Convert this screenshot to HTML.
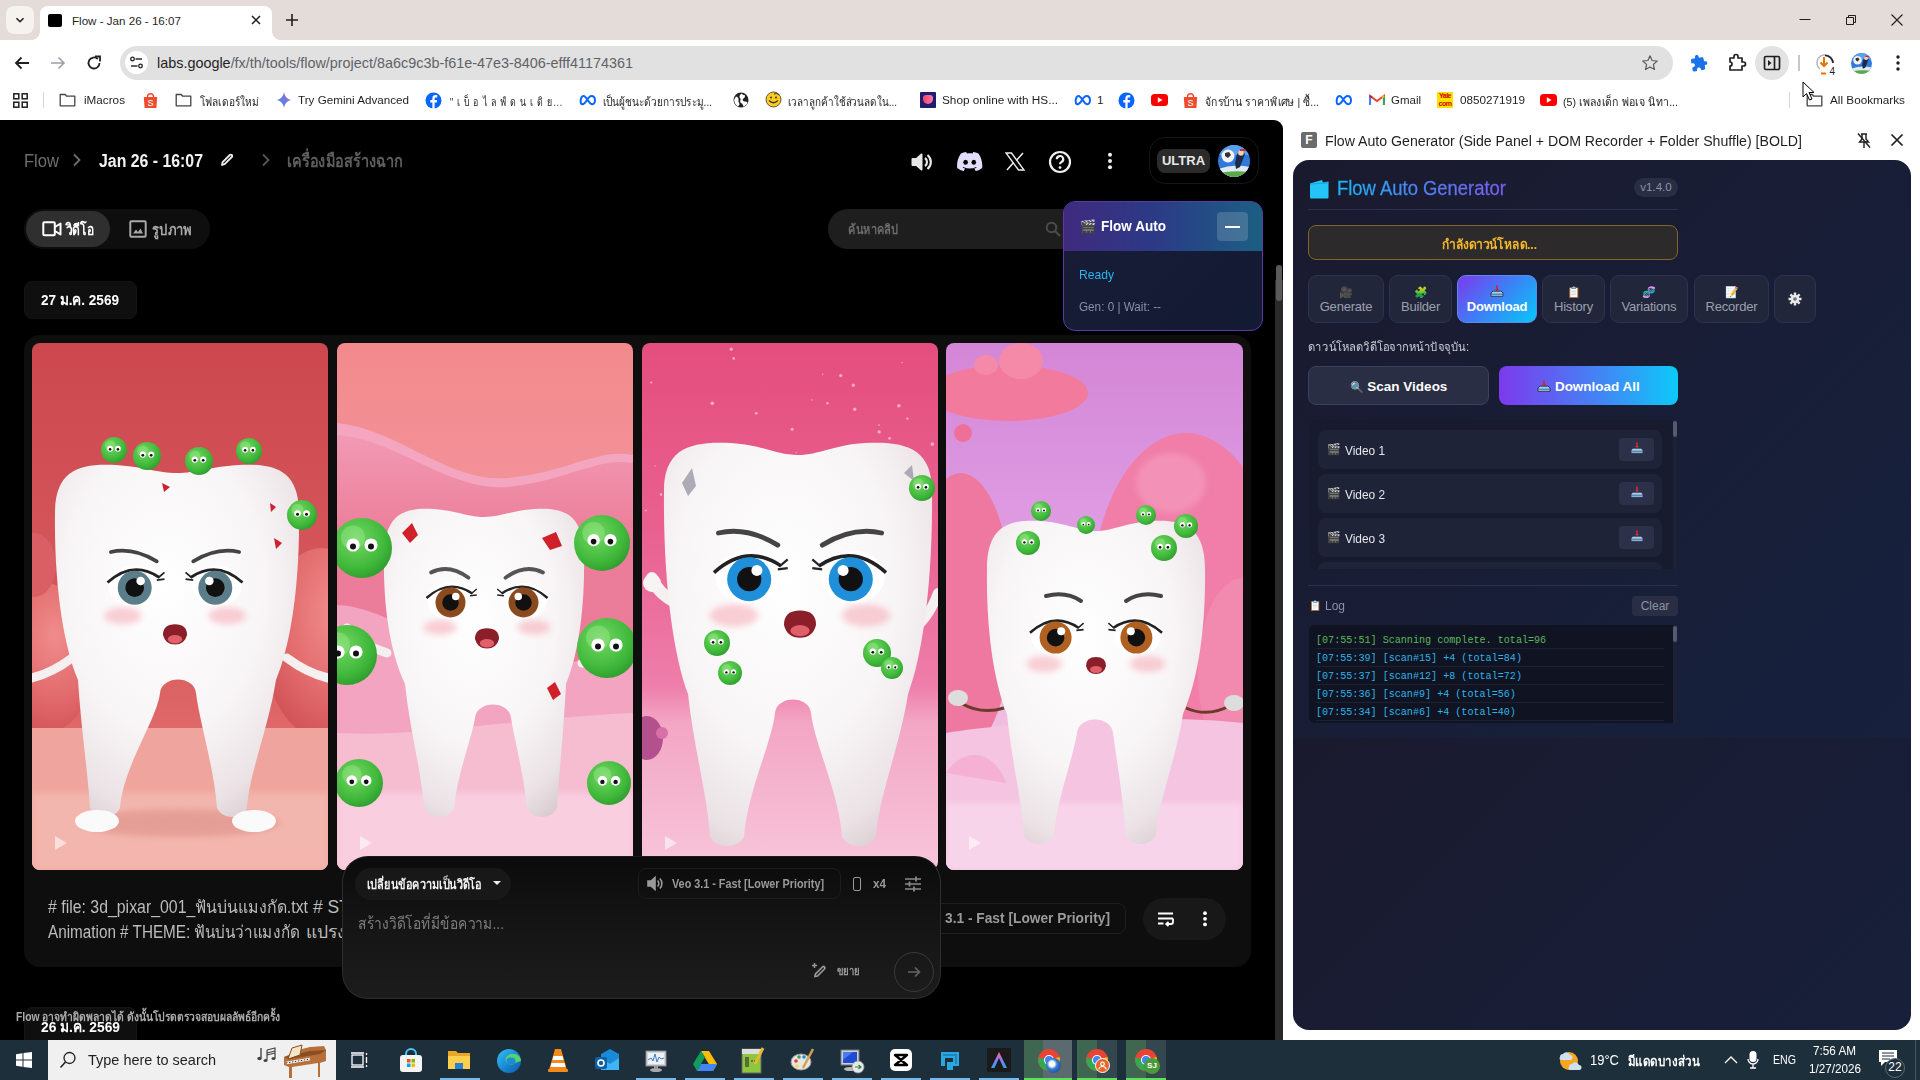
<!DOCTYPE html>
<html><head><meta charset="utf-8">
<style>
*{box-sizing:border-box;margin:0;padding:0}
html,body{width:1920px;height:1080px;overflow:hidden;background:#fff;font-family:"Liberation Sans",sans-serif}
.a{position:absolute}
#tabs{left:0;top:0;width:1920px;height:40px;background:#e4dcd8}
#toolbar{left:0;top:40px;width:1920px;height:40px;background:#fff}
#bm{left:0;top:80px;width:1920px;height:40px;background:#fff}
#page{left:0;top:120px;width:1283px;height:920px;background:#000;border-top-right-radius:9px;overflow:hidden}
#side{left:1283px;top:120px;width:637px;height:920px;background:#fff}
.t12{font-size:11.6px;white-space:nowrap}
.bmt{position:absolute;top:12.7px;font-size:11.7px;color:#1f1f1f;white-space:nowrap}
#taskbar{left:0;top:1040px;width:1920px;height:40px;background:#1e2f3c}
</style></head><body>
<div id="tabs" class="a">
  <div class="a" style="left:6px;top:6px;width:28px;height:28px;background:#f6f2f0;border-radius:8px"></div>
  <svg class="a" style="left:14px;top:14px" width="12" height="12" viewBox="0 0 12 12"><path d="M2.5 4.2 L6 7.7 L9.5 4.2" stroke="#202124" stroke-width="1.6" fill="none"/></svg>
  <div class="a" style="left:40px;top:6px;width:232px;height:34px;background:#fff;border-radius:8px 8px 0 0"></div>
  <div class="a" style="left:32px;top:32px;width:8px;height:8px;background:radial-gradient(circle at 0 0,#e4dcd8 7.5px,#fff 8px)"></div>
  <div class="a" style="left:272px;top:32px;width:8px;height:8px;background:radial-gradient(circle at 8px 0,#e4dcd8 7.5px,#fff 8px)"></div>
  <div class="a" style="left:48px;top:14px;width:14px;height:13px;background:#000;border-radius:2px;filter:blur(0.6px)"></div>
  <div class="a t12" style="left:72px;top:13.5px;color:#1f1f1f">Flow - Jan 26 - 16:07</div>
  <svg class="a" style="left:250px;top:14px" width="12" height="12" viewBox="0 0 12 12"><path d="M2 2L10 10M10 2L2 10" stroke="#1f1f1f" stroke-width="1.5"/></svg>
  <svg class="a" style="left:285px;top:13px" width="14" height="14" viewBox="0 0 14 14"><path d="M7 1V13M1 7H13" stroke="#1f1f1f" stroke-width="1.6"/></svg>
  <svg class="a" style="left:1799px;top:14px" width="12" height="12" viewBox="0 0 12 12"><path d="M0.5 5.5H11.5" stroke="#1f1f1f" stroke-width="1"/></svg>
  <svg class="a" style="left:1845px;top:14px" width="12" height="12" viewBox="0 0 12 12"><path d="M1.5 3.5H8.5V10.5H1.5Z M3.5 3.5V1.5H10.5V8.5H8.5" stroke="#1f1f1f" stroke-width="1" fill="none"/></svg>
  <svg class="a" style="left:1891px;top:14px" width="12" height="12" viewBox="0 0 12 12"><path d="M0.5 0.5L11.5 11.5M11.5 0.5L0.5 11.5" stroke="#1f1f1f" stroke-width="1.1"/></svg>
</div>
<div id="toolbar" class="a">
  <svg class="a" style="left:13px;top:14px" width="18" height="18" viewBox="0 0 18 18"><path d="M16 9H3M8.5 3.5L3 9L8.5 14.5" stroke="#1f1f1f" stroke-width="1.8" fill="none"/></svg>
  <svg class="a" style="left:49px;top:14px" width="18" height="18" viewBox="0 0 18 18"><path d="M2 9H15M9.5 3.5L15 9L9.5 14.5" stroke="#9aa0a6" stroke-width="1.6" fill="none"/></svg>
  <svg class="a" style="left:85px;top:14px" width="18" height="18" viewBox="0 0 18 18"><path d="M14.5 9A5.5 5.5 0 1 1 12.8 5" stroke="#1f1f1f" stroke-width="1.8" fill="none"/><path d="M10 2.5H15V7.5" stroke="#1f1f1f" stroke-width="1.8" fill="none"/></svg>
  <div class="a" style="left:120px;top:6px;width:1553px;height:34px;background:#e1e1e1;border-radius:17px"></div>
  <div class="a" style="left:125px;top:11px;width:23px;height:23px;background:#fff;border-radius:50%"></div>
  <svg class="a" style="left:129px;top:15px" width="15" height="15" viewBox="0 0 15 15"><circle cx="3.5" cy="4" r="1.8" stroke="#1f1f1f" stroke-width="1.3" fill="none"/><path d="M6.5 4H13" stroke="#1f1f1f" stroke-width="1.4"/><path d="M2 11H8.5" stroke="#1f1f1f" stroke-width="1.4"/><circle cx="11.5" cy="11" r="1.8" stroke="#1f1f1f" stroke-width="1.3" fill="none"/></svg>
  <div class="a" style="left:157px;top:15px;font-size:14.4px;color:#1f1f1f;white-space:nowrap">labs.google<span style="color:#5f6368">/fx/th/tools/flow/project/8a6c9c3b-f61e-47e3-8406-efff41174361</span></div>
  <svg class="a" style="left:1641px;top:14px" width="18" height="18" viewBox="0 0 18 18"><path d="M9 1.8L11.1 6.5L16.2 7L12.4 10.4L13.5 15.5L9 12.9L4.5 15.5L5.6 10.4L1.8 7L6.9 6.5Z" stroke="#5a5a5a" stroke-width="1.2" fill="none" stroke-linejoin="round"/></svg>
  <svg class="a" style="left:1690px;top:55px;transform:translateY(-41px) rotate(-10deg)" width="18" height="18" viewBox="0 0 24 24"><path d="M20.5 11H19V7c0-1.1-.9-2-2-2h-4V3.5C13 2.12 11.88 1 10.5 1S8 2.12 8 3.5V5H4c-1.1 0-1.99.9-1.99 2v3.8H3.5c1.49 0 2.7 1.21 2.7 2.7s-1.21 2.7-2.7 2.7H2V20c0 1.1.9 2 2 2h3.8v-1.5c0-1.490 1.21-2.7 2.7-2.7 1.49 0 2.7 1.21 2.7 2.7V22H17c1.1 0 2-.9 2-2v-4h1.5c1.38 0 2.5-1.12 2.5-2.5S21.88 11 20.5 11z" fill="#1a73e8"/></svg>
  <svg class="a" style="left:1727px;top:13px" width="20" height="20" viewBox="0 0 20 20"><path d="M3 5H7V3.5A2 2 0 0 1 11 3.5V5H15V9H16.5A2 2 0 0 1 16.5 13H15V17H3V13A2 2 0 0 0 3 9Z" stroke="#1f1f1f" stroke-width="1.7" fill="none" stroke-linejoin="round"/></svg>
  <div class="a" style="left:1755px;top:6px;width:34px;height:34px;background:#e3e3e3;border-radius:50%"></div>
  <svg class="a" style="left:1763px;top:14px" width="18" height="18" viewBox="0 0 18 18"><rect x="1.5" y="2.5" width="15" height="13" rx="1.5" stroke="#1f1f1f" stroke-width="1.7" fill="none"/><path d="M11.5 2.5V15.5" stroke="#1f1f1f" stroke-width="1.7"/><path d="M5 6L8.5 9L5 12Z" fill="#1f1f1f"/></svg>
  <div class="a" style="left:1798px;top:15px;width:1.5px;height:16px;background:#c7c7c7"></div>
  <svg class="a" style="left:1814px;top:11px" width="24" height="26" viewBox="0 0 24 26"><path d="M19 12A8 8 0 1 0 6 18" stroke="#bbb" stroke-width="1.6" fill="none"/><path d="M11 4.5A8 8 0 0 1 19 12" stroke="#1f1f1f" stroke-width="1.6" fill="none"/><path d="M10 6V15M6.5 11.5L10 15L13.5 11.5" stroke="#e37400" stroke-width="2" fill="none"/><path d="M7 22.5H12" stroke="#e37400" stroke-width="2"/><text x="15.5" y="24" font-size="10" font-family="Liberation Sans" fill="#1f1f1f">4</text></svg>
  <svg class="a" style="left:1851px;top:13px" width="21" height="21" viewBox="0 0 32 32"><defs><clipPath id="avc1851"><circle cx="16" cy="16" r="16"/></clipPath></defs><g clip-path="url(#avc1851)"><rect width="32" height="32" fill="#2f7ad8"/><rect y="0" width="32" height="10" fill="#5aa0ee"/><path d="M0 24Q16 18 32 22V32H0Z" fill="#dfeaf5"/><path d="M0 28Q16 25 32 27V32H0Z" fill="#5aa848"/><circle cx="10" cy="11" r="6.5" fill="#f2f2f2"/><path d="M7 8L11 7L13 10L10 13L7 11Z" fill="#333"/><path d="M19 9L24 6L27 9L25 14L22 22L18 24L17 18Z" fill="#1b2a4a"/><circle cx="23" cy="8" r="2.8" fill="#f4d0b0"/><path d="M22 4H28V6H22Z" fill="#d42a2a"/></g></svg>
  <svg class="a" style="left:1889px;top:14px" width="18" height="18" viewBox="0 0 18 18"><circle cx="9" cy="3" r="1.7" fill="#1f1f1f"/><circle cx="9" cy="9" r="1.7" fill="#1f1f1f"/><circle cx="9" cy="15" r="1.7" fill="#1f1f1f"/></svg>
</div>
<div id="bm" class="a">
  <svg class="a" style="left:13px;top:13px" width="15" height="15" viewBox="0 0 15 15"><rect x="0.8" y="0.8" width="5" height="5" stroke="#1f1f1f" stroke-width="1.5" fill="none"/><rect x="9.2" y="0.8" width="5" height="5" stroke="#1f1f1f" stroke-width="1.5" fill="none"/><rect x="0.8" y="9.2" width="5" height="5" stroke="#1f1f1f" stroke-width="1.5" fill="none"/><rect x="9.2" y="9.2" width="5" height="5" stroke="#1f1f1f" stroke-width="1.5" fill="none"/></svg>
  <div class="a" style="left:42.5px;top:12px;width:1px;height:16px;background:#d5d5d5"></div>
  <svg class="a" style="left:59px;top:12px" width="17" height="16" viewBox="0 0 17 16"><path d="M1.2 2.5H6.2L7.7 4.2H15.8V13.8H1.2Z" stroke="#444" stroke-width="1.3" fill="none" stroke-linejoin="round"/></svg><span class="bmt"  style="display:inline-block;transform-origin:0 50%;transform:scaleX(1.00191);left:84px">iMacros</span>
  <svg class="a" style="left:143px;top:12px" width="15" height="17" viewBox="0 0 15 17"><path d="M4.5 5A3 3.3 0 0 1 10.5 5" stroke="#ee4d2d" stroke-width="1.4" fill="none"/><path d="M0.8 5H14.2L13.4 16H1.6Z" fill="#ee4d2d"/><text x="7.5" y="14" font-size="9" text-anchor="middle" fill="#fff" font-family="Liberation Sans">S</text></svg>
  <svg class="a" style="left:175px;top:12px" width="17" height="16" viewBox="0 0 17 16"><path d="M1.2 2.5H6.2L7.7 4.2H15.8V13.8H1.2Z" stroke="#444" stroke-width="1.3" fill="none" stroke-linejoin="round"/></svg><span class="bmt"  style="display:inline-block;transform-origin:0 50%;transform:scaleX(0.867647);left:200px">โฟลเดอร์ใหม่</span>
  <svg class="a" style="left:276px;top:12px" width="16" height="16" viewBox="0 0 16 16"><defs><linearGradient id="gm" x1="0" y1="1" x2="1" y2="0"><stop offset="0" stop-color="#4285f4"/><stop offset="1" stop-color="#9b72cb"/></linearGradient></defs><path d="M8 0C8.6 4.5 11.5 7.4 16 8C11.5 8.6 8.6 11.5 8 16C7.4 11.5 4.5 8.6 0 8C4.5 7.4 7.4 4.5 8 0Z" fill="url(#gm)"/></svg>
  <span class="bmt"  style="display:inline-block;transform-origin:0 50%;transform:scaleX(0.997333);left:298px">Try Gemini Advanced</span>
  <svg class="a" style="left:425px;top:12px" width="17" height="17" viewBox="0 0 17 17"><circle cx="8.5" cy="8.5" r="8" fill="#0866ff"/><path d="M9.6 17V10.5H11.8L12.1 8H9.6V6.6C9.6 5.9 9.9 5.4 10.9 5.4H12.2V3.2C11.9 3.2 11.2 3.1 10.4 3.1C8.7 3.1 7.4 4.1 7.4 6.1V8H5.3V10.5H7.4V17Z" fill="#fff"/></svg><span class="bmt"  style="display:inline-block;transform-origin:0 50%;transform:scaleX(0.7553);left:450px;letter-spacing:1px">" เ บ็ อ ไ ล ฟ์ ด น เ ดิ ย...</span>
  <svg class="a" style="left:579px;top:13px" width="18" height="14" viewBox="0 0 18 14"><path d="M2 10.5C1 8 2 3 4.5 3C7 3 9.5 9 11.5 10.5C13.5 12 16 11 16 7.5C16 4 14 3 12.5 3C10.5 3 8.5 6 7 8.5C5.5 11 3 12 2 10.5Z" stroke="#0866ff" stroke-width="2" fill="none"/></svg><span class="bmt"  style="display:inline-block;transform-origin:0 50%;transform:scaleX(0.859961);left:603px">เป็นผู้ชนะด้วยการประมู...</span>
  <svg class="a" style="left:733px;top:12px" width="16" height="16" viewBox="0 0 16 16"><circle cx="8" cy="8" r="7.5" fill="#1f1f1f"/><path d="M3 4.5C5 5 6 6.5 5.5 8.5C5 10 6.5 10.5 6.5 12.5L5 14.5C2.5 13 1 10.5 1.2 7.5Z M9 1.5C9.5 3 11 3.5 12 3C12.5 5 11 6 10 7C9 8 10.5 9.5 12 9.5C13 9.5 14 10 14.5 10.5C14 12.5 12.5 14 10.5 14.8C10 13 9.5 11.5 8 11C7 10.5 7 9 7.5 8C8 7 7 6 6.5 5C6 4 7 2.5 9 1.5Z" fill="#fff"/></svg>
  <svg class="a" style="left:765px;top:11px" width="17" height="18" viewBox="0 0 17 18"><circle cx="8.5" cy="8.5" r="7.5" fill="#ffcc1d" stroke="#333" stroke-width="0.8"/><path d="M4 9.5Q8.5 14 13 9.5" stroke="#333" stroke-width="1.2" fill="none"/><circle cx="6" cy="6.5" r="1" fill="#333"/><circle cx="11" cy="6.5" r="1" fill="#333"/><path d="M9 3Q12 1.5 14 4" stroke="#333" stroke-width="1" fill="none"/></svg>
  <span class="bmt"  style="display:inline-block;transform-origin:0 50%;transform:scaleX(0.846602);left:788px">เวลาลูกค้าใช้ส่วนลดใน...</span>
  <div class="a" style="left:920px;top:12px;width:16px;height:16px;background:linear-gradient(135deg,#f5a 0%,#f36 50%,#10156f 51%);border-radius:2px"></div>
  <div class="a" style="left:920px;top:12px;width:16px;height:16px;background:#1a1f71;border-radius:1px"></div>
  <div class="a" style="left:923px;top:15px;width:10px;height:9px;background:linear-gradient(90deg,#f46,#f7a);border-radius:3px 3px 5px 5px"></div>
  <span class="bmt"  style="display:inline-block;transform-origin:0 50%;transform:scaleX(1.0087);left:942px">Shop online with HS...</span>
  <svg class="a" style="left:1074px;top:13px" width="18" height="14" viewBox="0 0 18 14"><path d="M2 10.5C1 8 2 3 4.5 3C7 3 9.5 9 11.5 10.5C13.5 12 16 11 16 7.5C16 4 14 3 12.5 3C10.5 3 8.5 6 7 8.5C5.5 11 3 12 2 10.5Z" stroke="#0866ff" stroke-width="2" fill="none"/></svg><span class="bmt" style="left:1097px">1</span>
  <svg class="a" style="left:1118px;top:12px" width="17" height="17" viewBox="0 0 17 17"><circle cx="8.5" cy="8.5" r="8" fill="#0866ff"/><path d="M9.6 17V10.5H11.8L12.1 8H9.6V6.6C9.6 5.9 9.9 5.4 10.9 5.4H12.2V3.2C11.9 3.2 11.2 3.1 10.4 3.1C8.7 3.1 7.4 4.1 7.4 6.1V8H5.3V10.5H7.4V17Z" fill="#fff"/></svg>
  <svg class="a" style="left:1151px;top:14px" width="17" height="12" viewBox="0 0 17 12"><rect x="0" y="0" width="17" height="12" rx="3.5" fill="#ff0000"/><path d="M6.8 3.2L11.5 6L6.8 8.8Z" fill="#fff"/></svg>
  <svg class="a" style="left:1183px;top:12px" width="15" height="17" viewBox="0 0 15 17"><path d="M4.5 5A3 3.3 0 0 1 10.5 5" stroke="#ee4d2d" stroke-width="1.4" fill="none"/><path d="M0.8 5H14.2L13.4 16H1.6Z" fill="#ee4d2d"/><text x="7.5" y="14" font-size="9" text-anchor="middle" fill="#fff" font-family="Liberation Sans">S</text></svg><span class="bmt"  style="display:inline-block;transform-origin:0 50%;transform:scaleX(0.893899);left:1205px">จักรบ้าน ราคาพิเศษ | ซื้...</span>
  <svg class="a" style="left:1335px;top:13px" width="18" height="14" viewBox="0 0 18 14"><path d="M2 10.5C1 8 2 3 4.5 3C7 3 9.5 9 11.5 10.5C13.5 12 16 11 16 7.5C16 4 14 3 12.5 3C10.5 3 8.5 6 7 8.5C5.5 11 3 12 2 10.5Z" stroke="#0866ff" stroke-width="2" fill="none"/></svg>
  <svg class="a" style="left:1369px;top:14px" width="16" height="12" viewBox="0 0 16 12"><path d="M1 11V2L8 7L15 2V11" stroke="#ea4335" stroke-width="2" fill="none"/><path d="M1 11V2" stroke="#4285f4" stroke-width="2.2"/><path d="M15 11V2" stroke="#34a853" stroke-width="2.2"/><path d="M1 2L3 3.5" stroke="#c5221f" stroke-width="2"/><path d="M15 2L13 3.5" stroke="#fbbc04" stroke-width="2"/></svg>
  <span class="bmt"  style="display:inline-block;transform-origin:0 50%;transform:scaleX(0.9826);left:1391px">Gmail</span>
  <div class="a" style="left:1437px;top:12px;width:16px;height:16px;background:#ffe100"></div>
  <div class="a" style="left:1437px;top:12px;width:16px;font:bold 7px/8px 'Liberation Sans';color:#c00;text-align:center;letter-spacing:-0.5px">Yale<br>com</div>
  <span class="bmt"  style="display:inline-block;transform-origin:0 50%;transform:scaleX(0.99976);left:1460px">0850271919</span>
  <svg class="a" style="left:1540px;top:14px" width="17" height="12" viewBox="0 0 17 12"><rect x="0" y="0" width="17" height="12" rx="3.5" fill="#ff0000"/><path d="M6.8 3.2L11.5 6L6.8 8.8Z" fill="#fff"/></svg><span class="bmt"  style="display:inline-block;transform-origin:0 50%;transform:scaleX(0.907074);left:1563px">(5) เพลงเด็ก พ่อเจ นิทา...</span>
  <div class="a" style="left:1788.5px;top:12px;width:1px;height:16px;background:#d5d5d5"></div>
  <svg class="a" style="left:1806px;top:12px" width="17" height="16" viewBox="0 0 17 16"><path d="M1.2 2.5H6.2L7.7 4.2H15.8V13.8H1.2Z" stroke="#444" stroke-width="1.3" fill="none" stroke-linejoin="round"/></svg><span class="bmt"  style="display:inline-block;transform-origin:0 50%;transform:scaleX(1.00397);left:1830px">All Bookmarks</span>
  <svg class="a" style="left:1802px;top:1px" width="14" height="20" viewBox="0 0 14 20"><path d="M1 1V16L4.5 12.5L7.5 19L10 18L7 11.5H12Z" fill="#fff" stroke="#000" stroke-width="1"/></svg>
</div>
<div id="page" class="a">
  <!-- header -->
  <div class="a"  style="display:inline-block;transform-origin:0 50%;transform:scaleX(0.920674);left:24px;top:31px;font-size:18px;color:#6e6e6e;white-space:nowrap">Flow</div>
  <svg class="a" style="left:70px;top:32px" width="14" height="16" viewBox="0 0 14 16"><path d="M4 2.5L9.5 8L4 13.5" stroke="#6e6e6e" stroke-width="1.8" fill="none"/></svg>
  <div class="a"  style="display:inline-block;transform-origin:0 50%;transform:scaleX(0.880773);left:99px;top:31px;font-size:18px;color:#f2f2f2;font-weight:bold;white-space:nowrap">Jan 26 - 16:07</div>
  <svg class="a" style="left:219px;top:32px" width="16" height="16" viewBox="0 0 16 16"><path d="M3 13L3.6 10.2L10.8 3A1.4 1.4 0 0 1 12.8 5L5.6 12.2Z" stroke="#eee" stroke-width="1.8" fill="none" stroke-linejoin="round"/></svg>
  <svg class="a" style="left:259px;top:32px" width="14" height="16" viewBox="0 0 14 16"><path d="M4 2.5L9.5 8L4 13.5" stroke="#555" stroke-width="1.8" fill="none"/></svg>
  <div class="a"  style="display:inline-block;transform-origin:0 50%;transform:scaleX(0.805556);left:287px;top:25.5px;font-size:18px;color:#5e5e5e;font-weight:bold;white-space:nowrap">เครื่องมือสร้างฉาก</div>
  <svg class="a" style="left:911px;top:32px" width="22" height="20" viewBox="0 0 22 20"><path d="M1.5 7H5.5L10.5 2.5V17.5L5.5 13H1.5Z" stroke="#e6e6e6" stroke-width="2" fill="#e6e6e6" stroke-linejoin="round"/><path d="M14 6A5 5 0 0 1 14 14" stroke="#e6e6e6" stroke-width="2.2" fill="none"/><path d="M16.5 3A9 9 0 0 1 16.5 17" stroke="#e6e6e6" stroke-width="2.2" fill="none"/></svg>
  <svg class="a" style="left:957px;top:31px" width="26" height="20" viewBox="0 0 26 20"><path d="M21.5 2.5C19.8 1.7 18 1.2 16.2 0.9L15.5 2.4C13.6 2.1 11.8 2.1 9.9 2.4L9.2 0.9C7.4 1.2 5.6 1.7 3.9 2.5C0.6 7.4 -0.3 12.2 0.2 16.9C2.4 18.5 4.5 19.5 6.6 20.1L8.2 17.6C7.3 17.3 6.5 16.9 5.7 16.4L6.3 15.9C10.5 17.9 15 17.9 19.1 15.9L19.7 16.4C18.9 16.9 18.1 17.3 17.2 17.6L18.8 20.1C20.9 19.5 23 18.5 25.2 16.9C25.7 11.4 24.3 6.7 21.5 2.5Z" fill="#e0defa"/><ellipse cx="8.6" cy="11.3" rx="2.3" ry="2.5" fill="#000"/><ellipse cx="16.8" cy="11.3" rx="2.3" ry="2.5" fill="#000"/></svg>
  <svg class="a" style="left:1005px;top:32px" width="20" height="19" viewBox="0 0 20 19"><path d="M1 1H6.5L19 18H13.5Z" stroke="#eee" stroke-width="1.4" fill="none"/><path d="M18 1L11.3 8.5M2 18L8.6 10.6" stroke="#eee" stroke-width="1.5"/></svg>
  <svg class="a" style="left:1048px;top:30px" width="24" height="24" viewBox="0 0 24 24"><circle cx="12" cy="12" r="10" stroke="#f0f0f0" stroke-width="2.2" fill="none"/><path d="M8.8 9.2A3.2 3.2 0 1 1 13.4 12.1C12.5 12.6 12 13.2 12 14.3" stroke="#f0f0f0" stroke-width="2.2" fill="none"/><circle cx="12" cy="17.6" r="1.4" fill="#f0f0f0"/></svg>
  <svg class="a" style="left:1104px;top:32px" width="12" height="18" viewBox="0 0 12 18"><circle cx="6" cy="2.8" r="2" fill="#eee"/><circle cx="6" cy="9" r="2" fill="#eee"/><circle cx="6" cy="15.2" r="2" fill="#eee"/></svg>
  <div class="a" style="left:1149px;top:17px;width:110px;height:47px;border-radius:16px;border:1px solid #161616"></div>
  <div class="a" style="left:1157px;top:29px;width:53px;height:24px;border-radius:8px;background:#2b2b2b;color:#e8e8e8;font-weight:bold;font-size:13px;line-height:24px;text-align:center">ULTRA</div>
  <svg class="a" style="left:1218px;top:25px" width="32" height="32" viewBox="0 0 32 32"><defs><clipPath id="avc1218"><circle cx="16" cy="16" r="16"/></clipPath></defs><g clip-path="url(#avc1218)"><rect width="32" height="32" fill="#2f7ad8"/><rect y="0" width="32" height="10" fill="#5aa0ee"/><path d="M0 24Q16 18 32 22V32H0Z" fill="#dfeaf5"/><path d="M0 28Q16 25 32 27V32H0Z" fill="#5aa848"/><circle cx="10" cy="11" r="6.5" fill="#f2f2f2"/><path d="M7 8L11 7L13 10L10 13L7 11Z" fill="#333"/><path d="M19 9L24 6L27 9L25 14L22 22L18 24L17 18Z" fill="#1b2a4a"/><circle cx="23" cy="8" r="2.8" fill="#f4d0b0"/><path d="M22 4H28V6H22Z" fill="#d42a2a"/></g></svg>
  <!-- tabs -->
  <div class="a" style="left:24px;top:89px;width:186px;height:40px;border-radius:20px;background:#0e0e0e"></div>
  <div class="a" style="left:26px;top:91px;width:84px;height:36px;border-radius:18px;background:#2f2f2f"></div>
  <svg class="a" style="left:42px;top:100px" width="20" height="18" viewBox="0 0 20 18"><rect x="1.3" y="2.3" width="11.5" height="13" rx="1" stroke="#fff" stroke-width="2" fill="none"/><path d="M13 7L18.5 3.5V14.5L13 11" stroke="#fff" stroke-width="2" fill="none" stroke-linejoin="round"/></svg>
  <div class="a"  style="display:inline-block;transform-origin:0 50%;transform:scaleX(0.8);left:66px;top:98px;font-size:15px;color:#fff;font-weight:bold;white-space:nowrap">วิดีโอ</div>
  <svg class="a" style="left:129px;top:100px" width="18" height="18" viewBox="0 0 18 18"><rect x="1.3" y="1.3" width="15.4" height="15.4" rx="1" stroke="#a8a8a8" stroke-width="2" fill="none"/><path d="M4 13.5L7 9.5L9 12L11.5 8.5L14 13.5Z" fill="#a8a8a8"/></svg>
  <div class="a"  style="display:inline-block;transform-origin:0 50%;transform:scaleX(0.869565);left:152px;top:98px;font-size:15px;color:#a8a8a8;font-weight:bold;white-space:nowrap">รูปภาพ</div>
  <!-- search -->
  <div class="a" style="left:828px;top:89px;width:260px;height:40px;border-radius:20px;background:#1e1e1e"></div>
  <div class="a"  style="display:inline-block;transform-origin:0 50%;transform:scaleX(0.847458);left:848px;top:98.5px;font-size:13px;color:#6b6b6b;font-weight:bold;white-space:nowrap">ค้นหาคลิป</div>
  <svg class="a" style="left:1045px;top:101px" width="16" height="16" viewBox="0 0 16 16"><circle cx="6.5" cy="6.5" r="4.8" stroke="#4a4a4a" stroke-width="2" fill="none"/><path d="M10 10L15 15" stroke="#4a4a4a" stroke-width="2.2"/></svg>
  <!-- date chip -->
  <div class="a" style="left:24px;top:161px;width:113px;height:38px;border-radius:8px;background:#0f0f0f;border:1px solid #141414"></div>
  <div class="a"  style="display:inline-block;transform-origin:0 50%;transform:scaleX(0.876866);left:41px;top:166.8px;font-size:15.5px;color:#fff;font-weight:bold;white-space:nowrap">27 ม.ค. 2569</div>
  <!-- card -->
  <div class="a" style="left:24px;top:215px;width:1227px;height:632px;border-radius:16px;background:#0e0e0e"></div>
  <div id="imgs"><div class="a" style="left:32px;top:223px;width:296px;height:527px;border-radius:8px;overflow:hidden"><svg width="296" height="527" viewBox="0 0 296 527"><defs><radialGradient id="gg" cx="0.4" cy="0.35" r="0.7"><stop offset="0" stop-color="#74d864"/><stop offset="0.7" stop-color="#3fb83a"/><stop offset="1" stop-color="#2e9a2e"/></radialGradient><filter id="bl3" x="-20%" y="-20%" width="140%" height="140%"><feGaussianBlur stdDeviation="0.7"/></filter><filter id="bl" x="-50%" y="-50%" width="200%" height="200%"><feGaussianBlur stdDeviation="3"/></filter><filter id="bl2" x="-50%" y="-50%" width="200%" height="200%"><feGaussianBlur stdDeviation="1.2"/></filter></defs><defs><linearGradient id="b1" x1="0" y1="0" x2="0" y2="1"><stop offset="0" stop-color="#cc484e"/><stop offset="0.5" stop-color="#d6585c"/><stop offset="0.73" stop-color="#df6868"/><stop offset="0.74" stop-color="#eb9890"/><stop offset="1" stop-color="#f4bdb5"/></linearGradient></defs><rect width="296" height="527" fill="url(#b1)"/><defs><radialGradient id="bu1" cx="0.6" cy="0.35" r="0.7"><stop offset="0" stop-color="#f08c8c"/><stop offset="0.6" stop-color="#e26a6c"/><stop offset="1" stop-color="#cf5256"/></radialGradient></defs><ellipse cx="12" cy="315" rx="52" ry="75" fill="url(#bu1)"/><ellipse cx="2" cy="222" rx="22" ry="32" fill="#d95f64"/><ellipse cx="290" cy="300" rx="58" ry="95" fill="url(#bu1)"/><rect x="0" y="385" width="296" height="142" fill="#efa59d"/><rect x="0" y="450" width="296" height="77" fill="#f3b6ae" filter="url(#bl)"/><ellipse cx="148" cy="480" rx="100" ry="14" fill="#d88880" opacity="0.5" filter="url(#bl)"/><path d="M40,315 Q20,330 0,335" stroke="#f5f0f0" stroke-width="9" fill="none" stroke-linecap="round"/><path d="M255,315 Q275,330 296,335" stroke="#f5f0f0" stroke-width="9" fill="none" stroke-linecap="round"/><defs><radialGradient id="tg1" cx="0.45" cy="0.35" r="0.75"><stop offset="0" stop-color="#ffffff"/><stop offset="0.55" stop-color="#f8f5f6"/><stop offset="0.85" stop-color="#ebe2e5"/><stop offset="1" stop-color="#d8cbcf"/></radialGradient></defs>
<path d="M23,170 C23,127 47.400000000000006,120 84.0,122 C113.28,124 125.48,130 145.0,130 C164.52,130 176.72,124 206.0,122 C242.6,120 267,127 267,170 C268,245.15 257.8,304.75 244,337 C236.75,383.9 217,430.8 215,465 C209.0,477 191.0,477 185,465 C182,423.75 167,376.5 164,350 C162,332 130,332 128,350 C125,376.5 91,423.75 88,465 C82.0,477 64.0,477 58,465 C56,430.8 49.0,383.9 46,337 C32.2,304.75 22,245.15 23,170 Z" fill="url(#tg1)"/><ellipse cx="65" cy="478" rx="22" ry="11" fill="#fafafa"/><ellipse cx="222" cy="478" rx="22" ry="11" fill="#fafafa"/><g transform="translate(101,243) scale(1,1)">
<ellipse cx="0" cy="0" rx="24.65" ry="20.4" fill="#fff"/>
<path d="M-25.5,-3.4000000000000004 Q0,-26.35 26.35,-8.5" stroke="#222" stroke-width="2.72" fill="none"/>
<path d="M25.5,-8.5 l5.949999999999999,-5.1 M23.799999999999997,-5.949999999999999 l7.65,-0.8500000000000001" stroke="#222" stroke-width="1.7000000000000002"/>
<circle cx="1.7000000000000002" cy="1.7000000000000002" r="17" fill="#5b7d8a"/>
<circle cx="1.7000000000000002" cy="1.7000000000000002" r="9.350000000000001" fill="#111"/>
<circle cx="7.65" cy="-5.1" r="4.25" fill="#fff"/>
</g><g transform="translate(185,243) scale(-1,1)">
<ellipse cx="0" cy="0" rx="24.65" ry="20.4" fill="#fff"/>
<path d="M-25.5,-3.4000000000000004 Q0,-26.35 26.35,-8.5" stroke="#222" stroke-width="2.72" fill="none"/>
<path d="M25.5,-8.5 l5.949999999999999,-5.1 M23.799999999999997,-5.949999999999999 l7.65,-0.8500000000000001" stroke="#222" stroke-width="1.7000000000000002"/>
<circle cx="1.7000000000000002" cy="1.7000000000000002" r="17" fill="#5b7d8a"/>
<circle cx="1.7000000000000002" cy="1.7000000000000002" r="9.350000000000001" fill="#111"/>
<circle cx="7.65" cy="-5.1" r="4.25" fill="#fff"/>
</g><path d="M78.9,209.0 Q101,203.9 124.8,218.35" stroke="#444" stroke-width="3.74" fill="none" stroke-linecap="round"/><path d="M207.1,209.0 Q185,203.9 161.2,218.35" stroke="#444" stroke-width="3.74" fill="none" stroke-linecap="round"/><ellipse cx="90.8" cy="272.75" rx="18.700000000000003" ry="8.5" fill="#f6a9b5" opacity="0.55" filter="url(#bl)"/><ellipse cx="195.2" cy="272.75" rx="18.700000000000003" ry="8.5" fill="#f6a9b5" opacity="0.55" filter="url(#bl)"/><path d="M131,292 Q131,281.2 143,281.2 Q155,281.2 155,292 Q152.6,301.6 143,301.6 Q133.4,301.6 131,292 Z" fill="#8a1f2a"/><ellipse cx="143" cy="296.2" rx="7.199999999999999" ry="4.199999999999999" fill="#e0606a"/><g transform="translate(82,107)"><circle r="13" fill="url(#gg)" filter="url(#bl3)"/><circle cx="-3.9" cy="-4.55" r="5.2" fill="#9be88a" opacity="0.45" filter="url(#bl3)"/><circle cx="-3.9" cy="-1.3" r="2.86" fill="#fff"/><circle cx="3.9" cy="-1.3" r="2.86" fill="#fff"/><circle cx="-3.9" cy="-0.65" r="1.3" fill="#111"/><circle cx="3.9" cy="-0.65" r="1.3" fill="#111"/></g><g transform="translate(115,113)"><circle r="14" fill="url(#gg)" filter="url(#bl3)"/><circle cx="-4.2" cy="-4.8999999999999995" r="5.6000000000000005" fill="#9be88a" opacity="0.45" filter="url(#bl3)"/><circle cx="-4.2" cy="-1.4000000000000001" r="3.08" fill="#fff"/><circle cx="4.2" cy="-1.4000000000000001" r="3.08" fill="#fff"/><circle cx="-4.2" cy="-0.7000000000000001" r="1.4000000000000001" fill="#111"/><circle cx="4.2" cy="-0.7000000000000001" r="1.4000000000000001" fill="#111"/></g><g transform="translate(167,118)"><circle r="14" fill="url(#gg)" filter="url(#bl3)"/><circle cx="-4.2" cy="-4.8999999999999995" r="5.6000000000000005" fill="#9be88a" opacity="0.45" filter="url(#bl3)"/><circle cx="-4.2" cy="-1.4000000000000001" r="3.08" fill="#fff"/><circle cx="4.2" cy="-1.4000000000000001" r="3.08" fill="#fff"/><circle cx="-4.2" cy="-0.7000000000000001" r="1.4000000000000001" fill="#111"/><circle cx="4.2" cy="-0.7000000000000001" r="1.4000000000000001" fill="#111"/></g><g transform="translate(217,108)"><circle r="13" fill="url(#gg)" filter="url(#bl3)"/><circle cx="-3.9" cy="-4.55" r="5.2" fill="#9be88a" opacity="0.45" filter="url(#bl3)"/><circle cx="-3.9" cy="-1.3" r="2.86" fill="#fff"/><circle cx="3.9" cy="-1.3" r="2.86" fill="#fff"/><circle cx="-3.9" cy="-0.65" r="1.3" fill="#111"/><circle cx="3.9" cy="-0.65" r="1.3" fill="#111"/></g><g transform="translate(270,172)"><circle r="15" fill="url(#gg)" filter="url(#bl3)"/><circle cx="-4.5" cy="-5.25" r="6.0" fill="#9be88a" opacity="0.45" filter="url(#bl3)"/><circle cx="-4.5" cy="-1.5" r="3.3" fill="#fff"/><circle cx="4.5" cy="-1.5" r="3.3" fill="#fff"/><circle cx="-4.5" cy="-0.75" r="1.5" fill="#111"/><circle cx="4.5" cy="-0.75" r="1.5" fill="#111"/></g><path d="M130,140 l8,4 -6,5z M238,160 l6,4 -5,5z M242,195 l8,5 -6,6z" fill="#d02030"/><path d="M23,493 L35,500 L23,507 Z" fill="#fff" opacity="0.55"/></svg></div>
<div class="a" style="left:337px;top:223px;width:296px;height:527px;border-radius:8px;overflow:hidden"><svg width="296" height="527" viewBox="0 0 296 527"><defs><radialGradient id="gg" cx="0.4" cy="0.35" r="0.7"><stop offset="0" stop-color="#74d864"/><stop offset="0.7" stop-color="#3fb83a"/><stop offset="1" stop-color="#2e9a2e"/></radialGradient><filter id="bl3" x="-20%" y="-20%" width="140%" height="140%"><feGaussianBlur stdDeviation="0.7"/></filter><filter id="bl" x="-50%" y="-50%" width="200%" height="200%"><feGaussianBlur stdDeviation="3"/></filter><filter id="bl2" x="-50%" y="-50%" width="200%" height="200%"><feGaussianBlur stdDeviation="1.2"/></filter></defs><defs><linearGradient id="b2" x1="0" y1="0" x2="0" y2="1"><stop offset="0" stop-color="#f28a8c"/><stop offset="0.25" stop-color="#f39198"/><stop offset="1" stop-color="#f0a0b4"/></linearGradient></defs><rect width="296" height="527" fill="url(#b2)"/><path d="M0,80 C60,85 110,140 170,135 C230,130 260,105 296,112 V420 H0Z" fill="#f4a6c0"/><defs><linearGradient id="w2" x1="0" y1="0" x2="0" y2="1"><stop offset="0" stop-color="#f29ab4"/><stop offset="0.3" stop-color="#ec7e9a"/><stop offset="1" stop-color="#ea7896"/></linearGradient></defs><path d="M0,92 C60,96 110,148 170,144 C230,138 260,114 296,120 V420 H0Z" fill="url(#w2)"/><path d="M0,262 C40,262 90,300 150,318 C200,330 250,320 296,300 V420 H0Z" fill="#f2a4c0"/><path d="M0,390 C80,395 180,375 296,370 V527 H0Z" fill="#f6bcd0"/><rect x="0" y="450" width="296" height="77" fill="#f9cfe0" filter="url(#bl)"/><path d="M50,310 Q20,300 10,285" stroke="#f5f0f0" stroke-width="9" fill="none" stroke-linecap="round"/><path d="M245,320 Q270,310 285,290" stroke="#f5f0f0" stroke-width="9" fill="none" stroke-linecap="round"/><defs><radialGradient id="tg2" cx="0.45" cy="0.35" r="0.75"><stop offset="0" stop-color="#ffffff"/><stop offset="0.55" stop-color="#f8f5f6"/><stop offset="0.85" stop-color="#ebe2e5"/><stop offset="1" stop-color="#d8cbcf"/></radialGradient></defs>
<path d="M47,214 C47,171 67.0,164 97.0,166 C121.0,168 131.0,174 147.0,174 C163.0,174 173.0,168 197.0,166 C227.0,164 247,171 247,214 C248,271.15 239.8,314.75 229,341 C226.75,386.5 222,432.0 220,465 C214.0,477 196.0,477 190,465 C187,432.5 177,394.0 174,375 C172,357 140,357 138,375 C135,394.0 120,432.5 117,465 C111.0,477 93.0,477 87,465 C85,432.0 72.75,386.5 68,341 C55.4,314.75 46,271.15 47,214 Z" fill="url(#tg2)"/><g transform="translate(112,258) scale(1,1)">
<ellipse cx="0" cy="0" rx="21.75" ry="18.0" fill="#fff"/>
<path d="M-22.5,-3.0 Q0,-23.25 23.25,-7.5" stroke="#222" stroke-width="2.4" fill="none"/>
<path d="M22.5,-7.5 l5.25,-4.5 M21.0,-5.25 l6.75,-0.75" stroke="#222" stroke-width="1.5"/>
<circle cx="1.5" cy="1.5" r="15" fill="#8a4a1e"/>
<circle cx="1.5" cy="1.5" r="8.25" fill="#111"/>
<circle cx="6.75" cy="-4.5" r="3.75" fill="#fff"/>
</g><g transform="translate(188,258) scale(-1,1)">
<ellipse cx="0" cy="0" rx="21.75" ry="18.0" fill="#fff"/>
<path d="M-22.5,-3.0 Q0,-23.25 23.25,-7.5" stroke="#222" stroke-width="2.4" fill="none"/>
<path d="M22.5,-7.5 l5.25,-4.5 M21.0,-5.25 l6.75,-0.75" stroke="#222" stroke-width="1.5"/>
<circle cx="1.5" cy="1.5" r="15" fill="#8a4a1e"/>
<circle cx="1.5" cy="1.5" r="8.25" fill="#111"/>
<circle cx="6.75" cy="-4.5" r="3.75" fill="#fff"/>
</g><path d="M94.0,229.5 Q112,220.5 131.5,234.75" stroke="#555" stroke-width="3.75" fill="none" stroke-linecap="round"/><path d="M206.0,229.5 Q188,220.5 168.5,234.75" stroke="#555" stroke-width="3.75" fill="none" stroke-linecap="round"/><ellipse cx="103.0" cy="284.25" rx="16.5" ry="7.5" fill="#f6a9b5" opacity="0.55" filter="url(#bl)"/><ellipse cx="197.0" cy="284.25" rx="16.5" ry="7.5" fill="#f6a9b5" opacity="0.55" filter="url(#bl)"/><path d="M138,296 Q138,285.2 150,285.2 Q162,285.2 162,296 Q159.6,305.6 150,305.6 Q140.4,305.6 138,296 Z" fill="#8a1f2a"/><ellipse cx="150" cy="300.2" rx="7.199999999999999" ry="4.199999999999999" fill="#e0606a"/><g transform="translate(25,205)"><circle r="30" fill="url(#gg)" filter="url(#bl3)"/><circle cx="-9.0" cy="-10.5" r="12.0" fill="#9be88a" opacity="0.45" filter="url(#bl3)"/><circle cx="-9.0" cy="-3.0" r="6.6" fill="#fff"/><circle cx="9.0" cy="-3.0" r="6.6" fill="#fff"/><circle cx="-9.0" cy="-1.5" r="3.0" fill="#111"/><circle cx="9.0" cy="-1.5" r="3.0" fill="#111"/></g><g transform="translate(265,200)"><circle r="28" fill="url(#gg)" filter="url(#bl3)"/><circle cx="-8.4" cy="-9.799999999999999" r="11.200000000000001" fill="#9be88a" opacity="0.45" filter="url(#bl3)"/><circle cx="-8.4" cy="-2.8000000000000003" r="6.16" fill="#fff"/><circle cx="8.4" cy="-2.8000000000000003" r="6.16" fill="#fff"/><circle cx="-8.4" cy="-1.4000000000000001" r="2.8000000000000003" fill="#111"/><circle cx="8.4" cy="-1.4000000000000001" r="2.8000000000000003" fill="#111"/></g><g transform="translate(10,312)"><circle r="30" fill="url(#gg)" filter="url(#bl3)"/><circle cx="-9.0" cy="-10.5" r="12.0" fill="#9be88a" opacity="0.45" filter="url(#bl3)"/><circle cx="-9.0" cy="-3.0" r="6.6" fill="#fff"/><circle cx="9.0" cy="-3.0" r="6.6" fill="#fff"/><circle cx="-9.0" cy="-1.5" r="3.0" fill="#111"/><circle cx="9.0" cy="-1.5" r="3.0" fill="#111"/></g><g transform="translate(270,305)"><circle r="30" fill="url(#gg)" filter="url(#bl3)"/><circle cx="-9.0" cy="-10.5" r="12.0" fill="#9be88a" opacity="0.45" filter="url(#bl3)"/><circle cx="-9.0" cy="-3.0" r="6.6" fill="#fff"/><circle cx="9.0" cy="-3.0" r="6.6" fill="#fff"/><circle cx="-9.0" cy="-1.5" r="3.0" fill="#111"/><circle cx="9.0" cy="-1.5" r="3.0" fill="#111"/></g><g transform="translate(22,440)"><circle r="24" fill="url(#gg)" filter="url(#bl3)"/><circle cx="-7.199999999999999" cy="-8.399999999999999" r="9.600000000000001" fill="#9be88a" opacity="0.45" filter="url(#bl3)"/><circle cx="-7.199999999999999" cy="-2.4000000000000004" r="5.28" fill="#fff"/><circle cx="7.199999999999999" cy="-2.4000000000000004" r="5.28" fill="#fff"/><circle cx="-7.199999999999999" cy="-1.2000000000000002" r="2.4000000000000004" fill="#111"/><circle cx="7.199999999999999" cy="-1.2000000000000002" r="2.4000000000000004" fill="#111"/></g><g transform="translate(272,440)"><circle r="22" fill="url(#gg)" filter="url(#bl3)"/><circle cx="-6.6" cy="-7.699999999999999" r="8.8" fill="#9be88a" opacity="0.45" filter="url(#bl3)"/><circle cx="-6.6" cy="-2.2" r="4.84" fill="#fff"/><circle cx="6.6" cy="-2.2" r="4.84" fill="#fff"/><circle cx="-6.6" cy="-1.1" r="2.2" fill="#111"/><circle cx="6.6" cy="-1.1" r="2.2" fill="#111"/></g><path d="M65,190 l10,-10 6,12 -8,8z M205,195 l14,-6 6,14 -12,4z M210,345 l8,-6 6,12 -8,6z" fill="#d0202a"/><path d="M23,493 L35,500 L23,507 Z" fill="#fff" opacity="0.55"/></svg></div>
<div class="a" style="left:642px;top:223px;width:296px;height:527px;border-radius:8px;overflow:hidden"><svg width="296" height="527" viewBox="0 0 296 527"><defs><radialGradient id="gg" cx="0.4" cy="0.35" r="0.7"><stop offset="0" stop-color="#74d864"/><stop offset="0.7" stop-color="#3fb83a"/><stop offset="1" stop-color="#2e9a2e"/></radialGradient><filter id="bl3" x="-20%" y="-20%" width="140%" height="140%"><feGaussianBlur stdDeviation="0.7"/></filter><filter id="bl" x="-50%" y="-50%" width="200%" height="200%"><feGaussianBlur stdDeviation="3"/></filter><filter id="bl2" x="-50%" y="-50%" width="200%" height="200%"><feGaussianBlur stdDeviation="1.2"/></filter></defs><defs><linearGradient id="b3" x1="0" y1="0" x2="0" y2="1"><stop offset="0" stop-color="#e44e7e"/><stop offset="0.35" stop-color="#e9608f"/><stop offset="0.65" stop-color="#ee7eab"/><stop offset="0.72" stop-color="#f3a6c4"/><stop offset="1" stop-color="#f7c6da"/></linearGradient></defs><rect width="296" height="527" fill="url(#b3)"/><circle cx="70.4" cy="108.8" r="1.0" fill="#ffd0e0" opacity="0.7"/><circle cx="178.8" cy="125.1" r="0.7" fill="#ffd0e0" opacity="0.7"/><circle cx="3.9" cy="167.5" r="0.9" fill="#ffd0e0" opacity="0.7"/><circle cx="69.4" cy="199.1" r="1.2" fill="#ffd0e0" opacity="0.7"/><circle cx="247.6" cy="95.3" r="1.4" fill="#ffd0e0" opacity="0.7"/><circle cx="44.6" cy="127.0" r="1.6" fill="#ffd0e0" opacity="0.7"/><circle cx="154.9" cy="148.3" r="1.4" fill="#ffd0e0" opacity="0.7"/><circle cx="19.0" cy="151.6" r="1.3" fill="#ffd0e0" opacity="0.7"/><circle cx="89.2" cy="6.2" r="1.6" fill="#ffd0e0" opacity="0.7"/><circle cx="139.9" cy="143.8" r="1.7" fill="#ffd0e0" opacity="0.7"/><circle cx="211.4" cy="184.2" r="1.1" fill="#ffd0e0" opacity="0.7"/><circle cx="237.1" cy="88.9" r="1.7" fill="#ffd0e0" opacity="0.7"/><circle cx="260.1" cy="19.5" r="0.8" fill="#ffd0e0" opacity="0.7"/><circle cx="64.2" cy="193.1" r="1.1" fill="#ffd0e0" opacity="0.7"/><circle cx="185.5" cy="60.2" r="1.2" fill="#ffd0e0" opacity="0.7"/><circle cx="114.2" cy="70.2" r="1.3" fill="#ffd0e0" opacity="0.7"/><circle cx="172.9" cy="180.8" r="1.4" fill="#ffd0e0" opacity="0.7"/><circle cx="275.0" cy="171.3" r="1.8" fill="#ffd0e0" opacity="0.7"/><circle cx="198.7" cy="32.6" r="1.6" fill="#ffd0e0" opacity="0.7"/><circle cx="285.5" cy="180.9" r="1.3" fill="#ffd0e0" opacity="0.7"/><circle cx="211.3" cy="42.2" r="1.6" fill="#ffd0e0" opacity="0.7"/><circle cx="169.8" cy="57.0" r="0.7" fill="#ffd0e0" opacity="0.7"/><circle cx="252.8" cy="198.0" r="0.7" fill="#ffd0e0" opacity="0.7"/><circle cx="237.0" cy="82.1" r="0.8" fill="#ffd0e0" opacity="0.7"/><circle cx="87.0" cy="153.8" r="1.6" fill="#ffd0e0" opacity="0.7"/><circle cx="13.1" cy="122.9" r="0.7" fill="#ffd0e0" opacity="0.7"/><circle cx="212.7" cy="66.2" r="1.7" fill="#ffd0e0" opacity="0.7"/><circle cx="290.3" cy="101.1" r="1.8" fill="#ffd0e0" opacity="0.7"/><circle cx="91.7" cy="15.4" r="1.3" fill="#ffd0e0" opacity="0.7"/><circle cx="9.3" cy="39.5" r="1.1" fill="#ffd0e0" opacity="0.7"/><circle cx="180.7" cy="31.2" r="0.7" fill="#ffd0e0" opacity="0.7"/><circle cx="256.9" cy="62.8" r="1.8" fill="#ffd0e0" opacity="0.7"/><circle cx="265.4" cy="75.6" r="1.2" fill="#ffd0e0" opacity="0.7"/><circle cx="153.9" cy="128.8" r="1.3" fill="#ffd0e0" opacity="0.7"/><circle cx="165.5" cy="124.0" r="1.7" fill="#ffd0e0" opacity="0.7"/><circle cx="150.1" cy="86.2" r="1.5" fill="#ffd0e0" opacity="0.7"/><circle cx="70.3" cy="60.2" r="1.8" fill="#ffd0e0" opacity="0.7"/><circle cx="154.3" cy="109.7" r="0.6" fill="#ffd0e0" opacity="0.7"/><circle cx="122.9" cy="116.0" r="0.6" fill="#ffd0e0" opacity="0.7"/><circle cx="182.3" cy="126.4" r="0.7" fill="#ffd0e0" opacity="0.7"/><ellipse cx="5" cy="395" rx="16" ry="22" fill="#b5508e"/><circle cx="20" cy="390" r="6" fill="#d870a8"/><path d="M35,260 Q15,250 10,235" stroke="#f5f0f0" stroke-width="12" fill="none" stroke-linecap="round"/><circle cx="10" cy="240" r="9" fill="#f8f4f4"/><path d="M265,290 Q285,280 296,250" stroke="#f5f0f0" stroke-width="10" fill="none" stroke-linecap="round"/><defs><radialGradient id="tg3" cx="0.45" cy="0.35" r="0.75"><stop offset="0" stop-color="#ffffff"/><stop offset="0.55" stop-color="#f8f5f6"/><stop offset="0.85" stop-color="#ebe2e5"/><stop offset="1" stop-color="#d8cbcf"/></radialGradient></defs>
<path d="M22,148 C22,105 48.8,98 89.0,100 C121.16,102 134.56,112 156.0,112 C177.44,112 190.84,102 223.0,100 C263.2,98 290,105 290,148 C291,239.35000000000002 280.4,313.35 266,351 C258.0,403.15 236,455.3 234,494 C227.2,506 206.8,506 200,494 C197,449.6 172,399.2 169,370 C167,352 135,352 133,370 C130,399.2 105,449.6 102,494 C95.2,506 74.8,506 68,494 C66,455.3 51.5,403.15 46,351 C31.6,313.35 21,239.35000000000002 22,148 Z" fill="url(#tg3)"/><g transform="translate(105,234) scale(1,1)">
<ellipse cx="0" cy="0" rx="31.9" ry="26.4" fill="#fff"/>
<path d="M-33.0,-4.4 Q0,-34.1 34.1,-11.0" stroke="#222" stroke-width="3.52" fill="none"/>
<path d="M33.0,-11.0 l7.699999999999999,-6.6 M30.799999999999997,-7.699999999999999 l9.9,-1.1" stroke="#222" stroke-width="2.2"/>
<circle cx="2.2" cy="2.2" r="22" fill="#1e8fd8"/>
<circle cx="2.2" cy="2.2" r="12.100000000000001" fill="#111"/>
<circle cx="9.9" cy="-6.6" r="5.5" fill="#fff"/>
</g><g transform="translate(211,234) scale(-1,1)">
<ellipse cx="0" cy="0" rx="31.9" ry="26.4" fill="#fff"/>
<path d="M-33.0,-4.4 Q0,-34.1 34.1,-11.0" stroke="#222" stroke-width="3.52" fill="none"/>
<path d="M33.0,-11.0 l7.699999999999999,-6.6 M30.799999999999997,-7.699999999999999 l9.9,-1.1" stroke="#222" stroke-width="2.2"/>
<circle cx="2.2" cy="2.2" r="22" fill="#1e8fd8"/>
<circle cx="2.2" cy="2.2" r="12.100000000000001" fill="#111"/>
<circle cx="9.9" cy="-6.6" r="5.5" fill="#fff"/>
</g><path d="M76.4,190.0 Q105,183.4 135.8,202.1" stroke="#444" stroke-width="4.84" fill="none" stroke-linecap="round"/><path d="M239.6,190.0 Q211,183.4 180.2,202.1" stroke="#444" stroke-width="4.84" fill="none" stroke-linecap="round"/><ellipse cx="91.8" cy="272.5" rx="24.200000000000003" ry="11.0" fill="#f6a9b5" opacity="0.55" filter="url(#bl)"/><ellipse cx="224.2" cy="272.5" rx="24.200000000000003" ry="11.0" fill="#f6a9b5" opacity="0.55" filter="url(#bl)"/><path d="M142,282 Q142,267.6 158,267.6 Q174,267.6 174,282 Q170.8,294.8 158,294.8 Q145.2,294.8 142,282 Z" fill="#8a1f2a"/><ellipse cx="158" cy="287.6" rx="9.6" ry="5.6" fill="#e0606a"/><g transform="translate(75,300)"><circle r="13" fill="url(#gg)" filter="url(#bl3)"/><circle cx="-3.9" cy="-4.55" r="5.2" fill="#9be88a" opacity="0.45" filter="url(#bl3)"/><circle cx="-3.9" cy="-1.3" r="2.86" fill="#fff"/><circle cx="3.9" cy="-1.3" r="2.86" fill="#fff"/><circle cx="-3.9" cy="-0.65" r="1.3" fill="#111"/><circle cx="3.9" cy="-0.65" r="1.3" fill="#111"/></g><g transform="translate(88,330)"><circle r="12" fill="url(#gg)" filter="url(#bl3)"/><circle cx="-3.5999999999999996" cy="-4.199999999999999" r="4.800000000000001" fill="#9be88a" opacity="0.45" filter="url(#bl3)"/><circle cx="-3.5999999999999996" cy="-1.2000000000000002" r="2.64" fill="#fff"/><circle cx="3.5999999999999996" cy="-1.2000000000000002" r="2.64" fill="#fff"/><circle cx="-3.5999999999999996" cy="-0.6000000000000001" r="1.2000000000000002" fill="#111"/><circle cx="3.5999999999999996" cy="-0.6000000000000001" r="1.2000000000000002" fill="#111"/></g><g transform="translate(235,310)"><circle r="14" fill="url(#gg)" filter="url(#bl3)"/><circle cx="-4.2" cy="-4.8999999999999995" r="5.6000000000000005" fill="#9be88a" opacity="0.45" filter="url(#bl3)"/><circle cx="-4.2" cy="-1.4000000000000001" r="3.08" fill="#fff"/><circle cx="4.2" cy="-1.4000000000000001" r="3.08" fill="#fff"/><circle cx="-4.2" cy="-0.7000000000000001" r="1.4000000000000001" fill="#111"/><circle cx="4.2" cy="-0.7000000000000001" r="1.4000000000000001" fill="#111"/></g><g transform="translate(250,325)"><circle r="11" fill="url(#gg)" filter="url(#bl3)"/><circle cx="-3.3" cy="-3.8499999999999996" r="4.4" fill="#9be88a" opacity="0.45" filter="url(#bl3)"/><circle cx="-3.3" cy="-1.1" r="2.42" fill="#fff"/><circle cx="3.3" cy="-1.1" r="2.42" fill="#fff"/><circle cx="-3.3" cy="-0.55" r="1.1" fill="#111"/><circle cx="3.3" cy="-0.55" r="1.1" fill="#111"/></g><g transform="translate(280,145)"><circle r="13" fill="url(#gg)" filter="url(#bl3)"/><circle cx="-3.9" cy="-4.55" r="5.2" fill="#9be88a" opacity="0.45" filter="url(#bl3)"/><circle cx="-3.9" cy="-1.3" r="2.86" fill="#fff"/><circle cx="3.9" cy="-1.3" r="2.86" fill="#fff"/><circle cx="-3.9" cy="-0.65" r="1.3" fill="#111"/><circle cx="3.9" cy="-0.65" r="1.3" fill="#111"/></g><path d="M40,140 l10,-15 4,18 -8,10z M262,130 l8,-8 2,16z" fill="#9a9aa6" opacity="0.8"/><path d="M23,493 L35,500 L23,507 Z" fill="#fff" opacity="0.55"/></svg></div>
<div class="a" style="left:946px;top:223px;width:297px;height:527px;border-radius:8px;overflow:hidden"><svg width="297" height="527" viewBox="0 0 297 527"><defs><radialGradient id="gg" cx="0.4" cy="0.35" r="0.7"><stop offset="0" stop-color="#74d864"/><stop offset="0.7" stop-color="#3fb83a"/><stop offset="1" stop-color="#2e9a2e"/></radialGradient><filter id="bl3" x="-20%" y="-20%" width="140%" height="140%"><feGaussianBlur stdDeviation="0.7"/></filter><filter id="bl" x="-50%" y="-50%" width="200%" height="200%"><feGaussianBlur stdDeviation="3"/></filter><filter id="bl2" x="-50%" y="-50%" width="200%" height="200%"><feGaussianBlur stdDeviation="1.2"/></filter></defs><defs><linearGradient id="b4" x1="0" y1="0" x2="0" y2="1"><stop offset="0" stop-color="#d386d6"/><stop offset="0.45" stop-color="#e2a2e6"/><stop offset="0.72" stop-color="#f0bde2"/><stop offset="1" stop-color="#f7d3ea"/></linearGradient></defs><rect width="297" height="527" fill="url(#b4)"/><ellipse cx="240" cy="260" rx="95" ry="170" fill="#f07ea8"/><ellipse cx="225" cy="140" rx="35" ry="30" fill="#f6a0c0" opacity="0.6" filter="url(#bl)"/><ellipse cx="15" cy="270" rx="52" ry="140" fill="#ee78a0"/><ellipse cx="297" cy="330" rx="45" ry="95" fill="#f28ab0"/><ellipse cx="62" cy="50" rx="80" ry="28" fill="#f27a9c"/><ellipse cx="75" cy="18" rx="22" ry="18" fill="#f58aa8"/><ellipse cx="40" cy="22" rx="12" ry="10" fill="#f58aa8"/><circle cx="17" cy="90" r="9" fill="#ee7098"/><path d="M0,390 C60,380 200,370 297,380 V527 H0Z" fill="#f4c4e0"/><rect x="0" y="460" width="297" height="67" fill="#f8d4ea" filter="url(#bl)"/><path d="M0,430 C20,400 50,410 60,440 Z" fill="#f5b0d4"/><path d="M58,365 Q35,372 15,360" stroke="#6a3a2a" stroke-width="3" fill="none"/><path d="M240,365 Q262,375 285,362" stroke="#6a3a2a" stroke-width="3" fill="none"/><ellipse cx="12" cy="355" rx="10" ry="8" fill="#ddd"/><ellipse cx="288" cy="360" rx="10" ry="8" fill="#ddd"/><defs><radialGradient id="tg4" cx="0.45" cy="0.35" r="0.75"><stop offset="0" stop-color="#ffffff"/><stop offset="0.55" stop-color="#f8f5f6"/><stop offset="0.85" stop-color="#ebe2e5"/><stop offset="1" stop-color="#d8cbcf"/></radialGradient></defs>
<path d="M41,226 C41,183 62.8,176 95.5,178 C121.66,180 132.56,188 150.0,188 C167.44,188 178.34,180 204.5,178 C237.2,176 259,183 259,226 C260,291.25 250.2,342.05 237,371 C230.25,415.45 212,459.9 210,492 C204.0,504 186.0,504 180,492 C177,455.3 170,412.6 167,390 C165,372 133,372 131,390 C128,412.6 111,455.3 108,492 C102.0,504 84.0,504 78,492 C76,459.9 65.25,415.45 61,371 C49.0,342.05 40,291.25 41,226 Z" fill="url(#tg4)"/><g transform="translate(108,293) scale(1,1)">
<ellipse cx="0" cy="0" rx="23.2" ry="19.2" fill="#fff"/>
<path d="M-24.0,-3.2 Q0,-24.8 24.8,-8.0" stroke="#222" stroke-width="2.56" fill="none"/>
<path d="M24.0,-8.0 l5.6,-4.8 M22.4,-5.6 l7.2,-0.8" stroke="#222" stroke-width="1.6"/>
<circle cx="1.6" cy="1.6" r="16" fill="#b06020"/>
<circle cx="1.6" cy="1.6" r="8.8" fill="#111"/>
<circle cx="7.2" cy="-4.8" r="4.0" fill="#fff"/>
</g><g transform="translate(192,293) scale(-1,1)">
<ellipse cx="0" cy="0" rx="23.2" ry="19.2" fill="#fff"/>
<path d="M-24.0,-3.2 Q0,-24.8 24.8,-8.0" stroke="#222" stroke-width="2.56" fill="none"/>
<path d="M24.0,-8.0 l5.6,-4.8 M22.4,-5.6 l7.2,-0.8" stroke="#222" stroke-width="1.6"/>
<circle cx="1.6" cy="1.6" r="16" fill="#b06020"/>
<circle cx="1.6" cy="1.6" r="8.8" fill="#111"/>
<circle cx="7.2" cy="-4.8" r="4.0" fill="#fff"/>
</g><ellipse cx="98.4" cy="321.0" rx="17.6" ry="8.0" fill="#f6a9b5" opacity="0.55" filter="url(#bl)"/><ellipse cx="201.6" cy="321.0" rx="17.6" ry="8.0" fill="#f6a9b5" opacity="0.55" filter="url(#bl)"/><path d="M140,323 Q140,314.0 150,314.0 Q160,314.0 160,323 Q158.0,331.0 150,331.0 Q142.0,331.0 140,323 Z" fill="#8a1f2a"/><ellipse cx="150" cy="326.5" rx="6.0" ry="3.5" fill="#e0606a"/><path d="M100,253 Q120,248 135,258" stroke="#444" stroke-width="4" fill="none" stroke-linecap="round"/><path d="M180,258 Q195,248 215,253" stroke="#444" stroke-width="4" fill="none" stroke-linecap="round"/><g transform="translate(95,168)"><circle r="10" fill="url(#gg)" filter="url(#bl3)"/><circle cx="-3.0" cy="-3.5" r="4.0" fill="#9be88a" opacity="0.45" filter="url(#bl3)"/><circle cx="-3.0" cy="-1.0" r="2.2" fill="#fff"/><circle cx="3.0" cy="-1.0" r="2.2" fill="#fff"/><circle cx="-3.0" cy="-0.5" r="1.0" fill="#111"/><circle cx="3.0" cy="-0.5" r="1.0" fill="#111"/></g><g transform="translate(82,200)"><circle r="12" fill="url(#gg)" filter="url(#bl3)"/><circle cx="-3.5999999999999996" cy="-4.199999999999999" r="4.800000000000001" fill="#9be88a" opacity="0.45" filter="url(#bl3)"/><circle cx="-3.5999999999999996" cy="-1.2000000000000002" r="2.64" fill="#fff"/><circle cx="3.5999999999999996" cy="-1.2000000000000002" r="2.64" fill="#fff"/><circle cx="-3.5999999999999996" cy="-0.6000000000000001" r="1.2000000000000002" fill="#111"/><circle cx="3.5999999999999996" cy="-0.6000000000000001" r="1.2000000000000002" fill="#111"/></g><g transform="translate(140,182)"><circle r="9" fill="url(#gg)" filter="url(#bl3)"/><circle cx="-2.6999999999999997" cy="-3.15" r="3.6" fill="#9be88a" opacity="0.45" filter="url(#bl3)"/><circle cx="-2.6999999999999997" cy="-0.9" r="1.98" fill="#fff"/><circle cx="2.6999999999999997" cy="-0.9" r="1.98" fill="#fff"/><circle cx="-2.6999999999999997" cy="-0.45" r="0.9" fill="#111"/><circle cx="2.6999999999999997" cy="-0.45" r="0.9" fill="#111"/></g><g transform="translate(200,172)"><circle r="10" fill="url(#gg)" filter="url(#bl3)"/><circle cx="-3.0" cy="-3.5" r="4.0" fill="#9be88a" opacity="0.45" filter="url(#bl3)"/><circle cx="-3.0" cy="-1.0" r="2.2" fill="#fff"/><circle cx="3.0" cy="-1.0" r="2.2" fill="#fff"/><circle cx="-3.0" cy="-0.5" r="1.0" fill="#111"/><circle cx="3.0" cy="-0.5" r="1.0" fill="#111"/></g><g transform="translate(240,183)"><circle r="12" fill="url(#gg)" filter="url(#bl3)"/><circle cx="-3.5999999999999996" cy="-4.199999999999999" r="4.800000000000001" fill="#9be88a" opacity="0.45" filter="url(#bl3)"/><circle cx="-3.5999999999999996" cy="-1.2000000000000002" r="2.64" fill="#fff"/><circle cx="3.5999999999999996" cy="-1.2000000000000002" r="2.64" fill="#fff"/><circle cx="-3.5999999999999996" cy="-0.6000000000000001" r="1.2000000000000002" fill="#111"/><circle cx="3.5999999999999996" cy="-0.6000000000000001" r="1.2000000000000002" fill="#111"/></g><g transform="translate(218,205)"><circle r="13" fill="url(#gg)" filter="url(#bl3)"/><circle cx="-3.9" cy="-4.55" r="5.2" fill="#9be88a" opacity="0.45" filter="url(#bl3)"/><circle cx="-3.9" cy="-1.3" r="2.86" fill="#fff"/><circle cx="3.9" cy="-1.3" r="2.86" fill="#fff"/><circle cx="-3.9" cy="-0.65" r="1.3" fill="#111"/><circle cx="3.9" cy="-0.65" r="1.3" fill="#111"/></g><path d="M23,493 L35,500 L23,507 Z" fill="#fff" opacity="0.55"/></svg></div>
</div>
  <div class="a" style="left:48px;top:775px;font-size:17.5px;line-height:24.5px;color:#bcbcbc;white-space:nowrap"><span style="display:inline-block;transform-origin:0 50%;transform:scaleX(0.906466);"># file: 3d_pixar_001_ฟันบ่นแมงกัด.txt</span></div>
  <div class="a" style="left:313px;top:775px;font-size:17.5px;line-height:24.5px;color:#bcbcbc;white-space:nowrap">#&nbsp;STYLE</div>
  <div class="a" style="left:48px;top:799.5px;font-size:17.5px;line-height:24.5px;color:#bcbcbc;white-space:nowrap"><span style="display:inline-block;transform-origin:0 50%;transform:scaleX(0.872161);">Animation # THEME: ฟันบ่นว่าแมงกัด</span></div>
  <div class="a" style="left:306px;top:799.5px;font-size:17.5px;line-height:24.5px;color:#bcbcbc;white-space:nowrap">แปรงฟัน</div>
  <div class="a" style="left:900px;top:783px;width:226px;height:31px;border-radius:8px;border:1px solid #1f1f1f"></div>
  <div class="a"  style="display:inline-block;transform-origin:0 50%;transform:scaleX(0.916428);left:945px;top:789px;font-size:15px;color:#9a9a9a;font-weight:bold;white-space:nowrap">3.1 - Fast [Lower Priority]</div>
  <div class="a" style="left:1143px;top:778px;width:83px;height:42px;border-radius:21px;background:#181818"></div>
  <svg class="a" style="left:1157px;top:791px" width="18" height="16" viewBox="0 0 18 16"><path d="M1 2.5H16M1 7.5H16M1 12.5H6.5" stroke="#fff" stroke-width="2"/><path d="M16 7.5V11A2 2 0 0 1 14 13H9.5M11.5 10.8L9.2 13L11.5 15.2" stroke="#fff" stroke-width="1.8" fill="none"/></svg>
  <svg class="a" style="left:1199px;top:791px" width="12" height="16" viewBox="0 0 12 16"><circle cx="6" cy="2.2" r="1.9" fill="#fff"/><circle cx="6" cy="7.8" r="1.9" fill="#fff"/><circle cx="6" cy="13.4" r="1.9" fill="#fff"/></svg>
  <!-- prompt box -->
  <div class="a" style="left:342px;top:736px;width:599px;height:143px;border-radius:26px;background:linear-gradient(180deg,#0b0b0b 0%,#161616 55%,#1c1c1c 100%);border:1px solid #2e2e2e;border-top-color:#1a1a1a"></div>
  <div class="a" style="left:355px;top:748px;width:156px;height:32px;border-radius:16px;background:#181818"></div>
  <div class="a"  style="display:inline-block;transform-origin:0 50%;transform:scaleX(0.839416);left:367px;top:753.5px;font-size:13px;color:#f4f4f4;font-weight:bold;white-space:nowrap">เปลี่ยนข้อความเป็นวิดีโอ</div>
  <svg class="a" style="left:492px;top:760px" width="10" height="6" viewBox="0 0 10 6"><path d="M1 1H9L5 5Z" fill="#eee"/></svg>
  <div class="a" style="left:638px;top:748px;width:203px;height:31px;border-radius:8px;border:1px solid #1c1c1c"></div>
  <svg class="a" style="left:647px;top:756px" width="17" height="15" viewBox="0 0 17 15"><path d="M1 5H4L8 1.5V13.5L4 10H1Z" stroke="#9a9a9a" stroke-width="1.6" fill="#9a9a9a"/><path d="M10.5 4.5A4 4 0 0 1 10.5 10.5M12.8 2.5A7 7 0 0 1 12.8 12.5" stroke="#9a9a9a" stroke-width="1.6" fill="none"/></svg>
  <div class="a"  style="display:inline-block;transform-origin:0 50%;transform:scaleX(0.831595);left:672px;top:756px;font-size:13px;color:#9a9a9a;font-weight:bold;white-space:nowrap">Veo 3.1 - Fast [Lower Priority]</div>
  <div class="a" style="left:853px;top:757px;width:8px;height:14px;border:1.6px solid #9a9a9a;border-radius:2px"></div>
  <div class="a"  style="display:inline-block;transform-origin:0 50%;transform:scaleX(0.898488);left:873px;top:756px;font-size:13px;color:#9a9a9a;font-weight:bold">x4</div>
  <svg class="a" style="left:904px;top:756px" width="18" height="16" viewBox="0 0 18 16"><path d="M1 3H17M1 8H17M1 13H17" stroke="#8a8a8a" stroke-width="1.6"/><path d="M12 0.5V5.5M5.5 5.5V10.5M10 10.5V15.5" stroke="#8a8a8a" stroke-width="1.8"/></svg>
  <div class="a"  style="display:inline-block;transform-origin:0 50%;transform:scaleX(0.85709);left:358px;top:791px;font-size:16px;color:#7c7c7c;white-space:nowrap">สร้างวิดีโอที่มีข้อความ...</div>
  <svg class="a" style="left:811px;top:842px" width="17" height="16" viewBox="0 0 17 16"><path d="M4 14.5L4.5 12L11.5 5A1.4 1.4 0 0 1 13.5 7L6.5 14Z" stroke="#9a9a9a" stroke-width="1.7" fill="none"/><path d="M3.5 1V6M1 3.5H6" stroke="#9a9a9a" stroke-width="1.4"/></svg>
  <div class="a"  style="display:inline-block;transform-origin:0 50%;transform:scaleX(0.793103);left:837px;top:841px;font-size:12px;color:#9a9a9a;font-weight:bold">ขยาย</div>
  <div class="a" style="left:894px;top:832px;width:40px;height:40px;border-radius:50%;border:1px solid #3a3a3a"></div>
  <svg class="a" style="left:906px;top:844px" width="16" height="16" viewBox="0 0 16 16"><path d="M2 8H13.5M9 3.5L13.5 8L9 12.5" stroke="#666" stroke-width="1.6" fill="none"/></svg>
  <!-- footer -->
  <div class="a" style="left:24px;top:887px;width:113px;height:40px;border-radius:8px;background:#0f0f0f;border:1px solid #151515"></div>
  <div class="a"  style="display:inline-block;transform-origin:0 50%;transform:scaleX(0.888108);left:41px;top:894px;font-size:15.5px;color:#fff;font-weight:bold;white-space:nowrap">26 ม.ค. 2569</div>
  <div class="a"  style="display:inline-block;transform-origin:0 50%;transform:scaleX(0.859935);left:16px;top:887px;font-size:12px;color:#c8c8c8;font-weight:bold;white-space:nowrap;opacity:.85">Flow อาจทำผิดพลาดได้ ดังนั้นโปรดตรวจสอบผลลัพธ์อีกครั้ง</div>
  <!-- scrollbar -->
  <div class="a" style="left:1275px;top:160px;width:8px;height:760px;background:#2a2a2a"></div>
  <div class="a" style="left:1276px;top:145px;width:6px;height:36px;border-radius:3px;background:#5a5a5a"></div>
  <!-- flow auto widget -->
  <div class="a" style="left:1063px;top:81px;width:200px;height:130px;border-radius:12px;border:1px solid #5a3aa8;background:linear-gradient(135deg,#181c38,#131a33);overflow:hidden">
    <div class="a" style="left:0;top:0;width:200px;height:49px;background:linear-gradient(90deg,#3f2a7e 0%,#2c3a86 45%,#1b6083 100%)"></div>
    <div class="a" style="left:153px;top:10px;width:31px;height:29px;border-radius:4px;background:rgba(255,255,255,.16)"></div>
    <div class="a" style="left:161px;top:24px;width:15px;height:2px;background:#fff"></div>
    <div class="a" style="left:16px;top:17px;font-size:13px">🎬</div>
    <div class="a"  style="display:inline-block;transform-origin:0 50%;transform:scaleX(0.934831);left:37px;top:16px;font-size:14.5px;color:#fff;font-weight:bold;white-space:nowrap">Flow Auto</div>
    <div class="a"  style="display:inline-block;transform-origin:0 50%;transform:scaleX(0.931393);left:15px;top:65px;font-size:13px;color:#2cb5ea;white-space:nowrap">Ready</div>
    <div class="a"  style="display:inline-block;transform-origin:0 50%;transform:scaleX(0.975827);left:15px;top:98px;font-size:12px;color:#8a8fa3;white-space:nowrap">Gen: 0 | Wait: --</div>
  </div>
</div>
<div id="side" class="a">
  <div class="a" style="left:18px;top:12px;width:16px;height:16px;border-radius:2px;background:#6b6b6b;color:#fff;font-weight:bold;font-size:12px;line-height:16px;text-align:center">F</div>
  <div class="a"  style="display:inline-block;transform-origin:0 50%;transform:scaleX(1.01043);left:42px;top:13px;font-size:14px;color:#1f1f1f;white-space:nowrap">Flow Auto Generator (Side Panel + DOM Recorder + Folder Shuffle) [BOLD]</div>
  <svg class="a" style="left:573px;top:12px" width="16" height="17" viewBox="0 0 16 17"><path d="M5 2H11M6 2V7L3.5 10H12.5L10 7V2M8 10V16" stroke="#1f1f1f" stroke-width="1.4" fill="none"/><path d="M2 1.5L14 15.5" stroke="#1f1f1f" stroke-width="1.4"/></svg>
  <svg class="a" style="left:607px;top:13px" width="14" height="14" viewBox="0 0 14 14"><path d="M1.5 1.5L12.5 12.5M12.5 1.5L1.5 12.5" stroke="#1f1f1f" stroke-width="1.7"/></svg>
  <div class="a" style="left:10px;top:40px;width:618px;height:870px;border-radius:16px;overflow:hidden;background:linear-gradient(135deg,#1a1a2e 0%,#16213e 100%) 0 0/618px 578px repeat">
  </div>
  <svg class="a" style="left:26px;top:58px" width="21" height="21" viewBox="0 0 21 21"><path d="M1 5.5L13 2L14 4.5L19.5 3.5V19.5Q19.5 20.5 18.5 20.5H2Q1 20.5 1 19.5Z" fill="#22c5f5"/><path d="M1 6L19.5 5" stroke="#12a0d0" stroke-width="0.8"/></svg>
  <div class="a" style="display:inline-block;transform-origin:0 50%;transform:scaleX(0.944959);left:54px;top:57px;font-size:19.5px;font-weight:normal;-webkit-text-stroke:0.3px transparent;white-space:nowrap;background:linear-gradient(90deg,#18b8f5 0%,#4f7ff0 50%,#7c5cf0 100%);-webkit-background-clip:text;background-clip:text;color:transparent">Flow Auto Generator</div>
  <div class="a" style="left:351px;top:58px;width:44px;height:19px;border-radius:10px;background:#2a2e44;color:#8d92a6;font-size:11.5px;line-height:19px;text-align:center">v1.4.0</div>
  <div class="a" style="left:25px;top:89px;width:370px;height:1px;background:#2b3050"></div>
  <div class="a" style="left:25px;top:105px;width:370px;height:35px;border-radius:8px;background:#2c2a2b;border:1px solid #806428"></div>
  <div class="a" style="left:25px;top:113.5px;width:370px;text-align:center"><span  style="display:inline-block;transform-origin:0 50%;transform:scaleX(0.923731);font-size:13px;font-weight:bold;color:#f6b82a;white-space:nowrap">กำลังดาวน์โหลด...</span></div>
  <div class="a" style="left:25px;top:155px;width:76px;height:48px;border-radius:9px;background:#22263a;border:1px solid #2d3250"></div><div class="a" style="left:25px;top:165px;width:76px;text-align:center;font-size:11px;line-height:14px">🎥</div><div class="a" style="left:25px;top:179px;width:76px;text-align:center;font-size:13px;color:#9ba0b0;white-space:nowrap;letter-spacing:-0.2px">Generate</div><div class="a" style="left:106px;top:155px;width:63px;height:48px;border-radius:9px;background:#22263a;border:1px solid #2d3250"></div><div class="a" style="left:106px;top:165px;width:63px;text-align:center;font-size:11px;line-height:14px">🧩</div><div class="a" style="left:106px;top:179px;width:63px;text-align:center;font-size:13px;color:#9ba0b0;white-space:nowrap;letter-spacing:-0.2px">Builder</div><div class="a" style="left:174px;top:155px;width:80px;height:48px;border-radius:9px;background:linear-gradient(135deg,#7c3aed 0%,#3b82f6 50%,#06c8f8 100%);border:1px solid #5a8cf0"></div><div class="a" style="left:174px;top:165px;width:80px;text-align:center;font-size:11px;line-height:14px"><svg width="14" height="12" viewBox="0 0 14 12" style="vertical-align:-1px"><path d="M7 0.5V5.5" stroke="#c8283a" stroke-width="1.8"/><path d="M4.8 4.2L7 6.6L9.2 4.2Z" fill="#c8283a"/><path d="M1 8.2Q1.5 6.5 3.5 6.2H10.5Q12.5 6.5 13 8.2V11.3H1Z" fill="#9fd0f2" stroke="#2a3550" stroke-width="0.9"/><path d="M1.2 9.2H12.8" stroke="#2a3550" stroke-width="0.7"/></svg></div><div class="a" style="left:174px;top:179px;width:80px;text-align:center;font-size:13px;color:#fff;font-weight:bold;white-space:nowrap;letter-spacing:-0.2px">Download</div><div class="a" style="left:259px;top:155px;width:63px;height:48px;border-radius:9px;background:#22263a;border:1px solid #2d3250"></div><div class="a" style="left:259px;top:165px;width:63px;text-align:center;font-size:11px;line-height:14px">📋</div><div class="a" style="left:259px;top:179px;width:63px;text-align:center;font-size:13px;color:#9ba0b0;white-space:nowrap;letter-spacing:-0.2px">History</div><div class="a" style="left:327px;top:155px;width:78px;height:48px;border-radius:9px;background:#22263a;border:1px solid #2d3250"></div><div class="a" style="left:327px;top:165px;width:78px;text-align:center;font-size:11px;line-height:14px">🧬</div><div class="a" style="left:327px;top:179px;width:78px;text-align:center;font-size:13px;color:#9ba0b0;white-space:nowrap;letter-spacing:-0.2px">Variations</div><div class="a" style="left:411px;top:155px;width:75px;height:48px;border-radius:9px;background:#22263a;border:1px solid #2d3250"></div><div class="a" style="left:411px;top:165px;width:75px;text-align:center;font-size:11px;line-height:14px">📝</div><div class="a" style="left:411px;top:179px;width:75px;text-align:center;font-size:13px;color:#9ba0b0;white-space:nowrap;letter-spacing:-0.2px">Recorder</div><div class="a" style="left:491px;top:155px;width:42px;height:48px;border-radius:9px;background:#22263a;border:1px solid #2d3250"></div><svg class="a" style="left:505px;top:172px" width="14" height="14" viewBox="0 0 14 14"><circle cx="7" cy="7" r="4.2" fill="#e8e8e8"/><g stroke="#e8e8e8" stroke-width="2.4"><path d="M7 0.5V13.5M0.5 7H13.5M2.4 2.4L11.6 11.6M11.6 2.4L2.4 11.6"/></g><circle cx="7" cy="7" r="1.8" fill="#6b6f80"/></svg>
  <div class="a"  style="display:inline-block;transform-origin:0 50%;transform:scaleX(0.93418);left:25px;top:217px;font-size:12px;color:#c9ccd6;white-space:nowrap">ดาวน์โหลดวิดีโอจากหน้าปัจจุบัน:</div>
  <div class="a" style="left:25px;top:246px;width:181px;height:39px;border-radius:8px;background:#2a2e44;border:1px solid #3b405c"></div>
  <div class="a" style="left:25px;top:258.5px;width:181px;text-align:center;font-size:13.5px;color:#fff;font-weight:bold;white-space:nowrap"><span style="font-size:11px">🔍</span> Scan Videos</div>
  <div class="a" style="left:216px;top:246px;width:179px;height:39px;border-radius:8px;background:linear-gradient(90deg,#7c3aed 0%,#3f8af5 60%,#0ccaf8 100%)"></div>
  <div class="a" style="left:216px;top:258.5px;width:179px;text-align:center;font-size:13.5px;color:#fff;font-weight:bold;white-space:nowrap"><span style="font-size:11px"><svg width="14" height="12" viewBox="0 0 14 12" style="vertical-align:-1px"><path d="M7 0.5V5.5" stroke="#c8283a" stroke-width="1.8"/><path d="M4.8 4.2L7 6.6L9.2 4.2Z" fill="#c8283a"/><path d="M1 8.2Q1.5 6.5 3.5 6.2H10.5Q12.5 6.5 13 8.2V11.3H1Z" fill="#9fd0f2" stroke="#2a3550" stroke-width="0.9"/><path d="M1.2 9.2H12.8" stroke="#2a3550" stroke-width="0.7"/></svg></span> Download All</div>
  <div class="a" style="left:26px;top:300px;width:364px;height:149px;border-radius:8px 0 0 8px;background:#171b2d;overflow:hidden"></div>
  <div class="a" style="left:35px;top:310px;width:344px;height:39px;border-radius:8px;background:#1f2337"></div><div class="a" style="left:44px;top:322px;font-size:11px;line-height:14px;filter:grayscale(1)">🎬</div><div class="a"  style="display:inline-block;transform-origin:0 50%;transform:scaleX(0.912006);left:62px;top:323px;font-size:13px;color:#e6e6ea;white-space:nowrap">Video 1</div><div class="a" style="left:336px;top:318px;width:35px;height:23px;border-radius:4px;background:#2c3048"></div><div class="a" style="left:336px;top:322px;width:35px;text-align:center;font-size:11px;line-height:14px"><svg width="14" height="12" viewBox="0 0 14 12" style="vertical-align:-1px"><path d="M7 0.5V5.5" stroke="#c8283a" stroke-width="1.8"/><path d="M4.8 4.2L7 6.6L9.2 4.2Z" fill="#c8283a"/><path d="M1 8.2Q1.5 6.5 3.5 6.2H10.5Q12.5 6.5 13 8.2V11.3H1Z" fill="#9fd0f2" stroke="#2a3550" stroke-width="0.9"/><path d="M1.2 9.2H12.8" stroke="#2a3550" stroke-width="0.7"/></svg></div><div class="a" style="left:35px;top:354px;width:344px;height:39px;border-radius:8px;background:#1f2337"></div><div class="a" style="left:44px;top:366px;font-size:11px;line-height:14px;filter:grayscale(1)">🎬</div><div class="a"  style="display:inline-block;transform-origin:0 50%;transform:scaleX(0.912006);left:62px;top:367px;font-size:13px;color:#e6e6ea;white-space:nowrap">Video 2</div><div class="a" style="left:336px;top:362px;width:35px;height:23px;border-radius:4px;background:#2c3048"></div><div class="a" style="left:336px;top:366px;width:35px;text-align:center;font-size:11px;line-height:14px"><svg width="14" height="12" viewBox="0 0 14 12" style="vertical-align:-1px"><path d="M7 0.5V5.5" stroke="#c8283a" stroke-width="1.8"/><path d="M4.8 4.2L7 6.6L9.2 4.2Z" fill="#c8283a"/><path d="M1 8.2Q1.5 6.5 3.5 6.2H10.5Q12.5 6.5 13 8.2V11.3H1Z" fill="#9fd0f2" stroke="#2a3550" stroke-width="0.9"/><path d="M1.2 9.2H12.8" stroke="#2a3550" stroke-width="0.7"/></svg></div><div class="a" style="left:35px;top:398px;width:344px;height:39px;border-radius:8px;background:#1f2337"></div><div class="a" style="left:44px;top:410px;font-size:11px;line-height:14px;filter:grayscale(1)">🎬</div><div class="a"  style="display:inline-block;transform-origin:0 50%;transform:scaleX(0.912006);left:62px;top:411px;font-size:13px;color:#e6e6ea;white-space:nowrap">Video 3</div><div class="a" style="left:336px;top:406px;width:35px;height:23px;border-radius:4px;background:#2c3048"></div><div class="a" style="left:336px;top:410px;width:35px;text-align:center;font-size:11px;line-height:14px"><svg width="14" height="12" viewBox="0 0 14 12" style="vertical-align:-1px"><path d="M7 0.5V5.5" stroke="#c8283a" stroke-width="1.8"/><path d="M4.8 4.2L7 6.6L9.2 4.2Z" fill="#c8283a"/><path d="M1 8.2Q1.5 6.5 3.5 6.2H10.5Q12.5 6.5 13 8.2V11.3H1Z" fill="#9fd0f2" stroke="#2a3550" stroke-width="0.9"/><path d="M1.2 9.2H12.8" stroke="#2a3550" stroke-width="0.7"/></svg></div><div class="a" style="left:35px;top:442px;width:344px;height:7px;border-radius:8px 8px 0 0;background:#1f2337"></div>
  <div class="a" style="left:390px;top:300px;width:4px;height:149px;background:#1d2135"></div>
  <div class="a" style="left:390px;top:301px;width:4px;height:16px;border-radius:2px;background:#555a6e"></div>
  <div class="a" style="left:25px;top:465px;width:370px;height:1px;background:#2b3050"></div>
  <div class="a" style="left:26px;top:480px;font-size:10px;line-height:12px">📋</div>
  <div class="a"  style="display:inline-block;transform-origin:0 50%;transform:scaleX(0.958801);left:42px;top:479px;font-size:12.5px;color:#8d92a6">Log</div>
  <div class="a" style="left:349px;top:476px;width:46px;height:20px;border-radius:4px;background:#2a2e44;color:#8d92a6;font-size:12px;line-height:20px;text-align:center">Clear</div>
  <div class="a" style="left:26px;top:505px;width:364px;height:98px;border-radius:6px 0 0 6px;background:#0f1322"></div>
  <div class="a" style="left:33px;top:512px;font-family:'Liberation Mono',monospace;font-size:10.1px;line-height:18px;color:#5cb85c;white-space:pre">[07:55:51] Scanning complete. total=96</div><div class="a" style="left:33px;top:528px;width:348px;height:1px;background:#1c2136"></div><div class="a" style="left:33px;top:530px;font-family:'Liberation Mono',monospace;font-size:10.1px;line-height:18px;color:#2fb4e6;white-space:pre">[07:55:39] [scan#15] +4 (total=84)</div><div class="a" style="left:33px;top:546px;width:348px;height:1px;background:#1c2136"></div><div class="a" style="left:33px;top:548px;font-family:'Liberation Mono',monospace;font-size:10.1px;line-height:18px;color:#2fb4e6;white-space:pre">[07:55:37] [scan#12] +8 (total=72)</div><div class="a" style="left:33px;top:564px;width:348px;height:1px;background:#1c2136"></div><div class="a" style="left:33px;top:566px;font-family:'Liberation Mono',monospace;font-size:10.1px;line-height:18px;color:#2fb4e6;white-space:pre">[07:55:36] [scan#9] +4 (total=56)</div><div class="a" style="left:33px;top:582px;width:348px;height:1px;background:#1c2136"></div><div class="a" style="left:33px;top:584px;font-family:'Liberation Mono',monospace;font-size:10.1px;line-height:18px;color:#2fb4e6;white-space:pre">[07:55:34] [scan#6] +4 (total=40)</div><div class="a" style="left:33px;top:600px;width:348px;height:1px;background:#1c2136"></div>
  <div class="a" style="left:390px;top:505px;width:4px;height:98px;background:#1d2135"></div>
  <div class="a" style="left:390px;top:506px;width:4px;height:16px;border-radius:2px;background:#555a6e"></div>
</div>
<div id="taskbar" class="a">
  <svg class="a" style="left:16px;top:12px" width="16" height="16" viewBox="0 0 16 16"><path d="M0 2.2L6.5 1.3V7.5H0Z M7.5 1.1L16 0V7.5H7.5Z M0 8.5H6.5V14.7L0 13.8Z M7.5 8.5H16V16L7.5 14.9Z" fill="#fff"/></svg>
  <div class="a" style="left:48px;top:0;width:288px;height:40px;background:#f0f0f0"></div>
  <svg class="a" style="left:59px;top:11px" width="18" height="18" viewBox="0 0 18 18"><circle cx="10.5" cy="7" r="5.5" stroke="#1f1f1f" stroke-width="1.3" fill="none"/><path d="M6.5 11L1.5 16.5" stroke="#1f1f1f" stroke-width="1.5"/></svg>
  <div class="a"  style="display:inline-block;transform-origin:0 50%;transform:scaleX(0.965468);left:88px;top:11px;font-size:15px;color:#1f1f1f;white-space:nowrap">Type here to search</div>
  <svg class="a" style="left:256px;top:4px" width="22" height="22" viewBox="0 0 22 22"><path d="M5 4V14" stroke="#444" stroke-width="1.4"/><ellipse cx="3.5" cy="14.5" rx="2.2" ry="1.7" fill="#444"/><path d="M11 6L19 4V14M11 6V16M11 9L19 7M11 11L19 9" stroke="#444" stroke-width="1.2" fill="none"/><ellipse cx="9.5" cy="16.5" rx="2" ry="1.6" fill="#444"/><ellipse cx="17.5" cy="14.5" rx="2" ry="1.6" fill="#444"/></svg>
  <svg class="a" style="left:280px;top:1px" width="48" height="38" viewBox="0 0 48 38"><path d="M4 16L22 8L30 6L44 5L46 9V20L40 22V36H38V22L12 26V37H9V26L4 24Z" fill="#b8703a"/><path d="M4 16L30 10L46 9L40 13L10 18Z" fill="#8a4e24"/><path d="M8 18L12 7L22 4L20 14Z" fill="#f3e6c8" stroke="#8a4e24" stroke-width="1"/><path d="M6 22L30 18" stroke="#fff" stroke-width="2.5"/><path d="M6 22L30 18" stroke="#222" stroke-width="1" stroke-dasharray="1.5 1.5"/></svg>
  <svg class="a" style="left:351px;top:12px" width="18" height="16" viewBox="0 0 18 16"><rect x="1" y="3" width="11" height="10" stroke="#fff" stroke-width="1.3" fill="none"/><path d="M0 1H13M0 15H13M15.5 1V3M15.5 5V11M15.5 13V15" stroke="#fff" stroke-width="1.3"/></svg>
  <svg class="a" style="left:399px;top:8px" width="24" height="25" viewBox="0 0 24 25"><path d="M7 8V6A5 5 0 0 1 17 6V8" stroke="#4cc2ff" stroke-width="2" fill="none"/><rect x="1" y="7" width="22" height="17" rx="3" fill="#f4f4f4"/><rect x="8" y="11" width="3.5" height="3.5" fill="#f25022"/><rect x="12.5" y="11" width="3.5" height="3.5" fill="#7fba00"/><rect x="8" y="15.5" width="3.5" height="3.5" fill="#00a4ef"/><rect x="12.5" y="15.5" width="3.5" height="3.5" fill="#ffb900"/></svg>
  <svg class="a" style="left:447px;top:9px" width="24" height="22" viewBox="0 0 24 22"><path d="M1 2H9L11 4H23V20H1Z" fill="#e8a825"/><path d="M1 7H23V20H1Z" fill="#fcd04c"/><path d="M8 14H16V20H8Z" fill="#2b7fd4"/></svg>
  <svg class="a" style="left:496px;top:8px" width="26" height="26" viewBox="0 0 26 26"><defs><linearGradient id="eg" x1="0" y1="0" x2="1" y2="1"><stop offset="0" stop-color="#35c1f1"/><stop offset=".5" stop-color="#1b8cd8"/><stop offset="1" stop-color="#0c59a4"/></linearGradient></defs><circle cx="13" cy="13" r="12" fill="url(#eg)"/><path d="M25 13C25 8 20 5 15 6C10 7 8 12 11 15C13 17 17 17 19 15" fill="#54d36e"/><ellipse cx="15" cy="13" rx="4.5" ry="3.5" fill="#1b8cd8"/></svg>
  <svg class="a" style="left:547px;top:8px" width="22" height="25" viewBox="0 0 22 25"><path d="M8 1H14L20 22H2Z" fill="#f48a1b"/><path d="M6.5 8H15.5L16.5 12H5.5Z M4.5 15H17.5L18.5 19H3.5Z" fill="#fff"/><rect x="1" y="21" width="20" height="3" rx="1" fill="#f48a1b"/></svg>
  <svg class="a" style="left:594px;top:8px" width="26" height="25" viewBox="0 0 26 25"><path d="M7 6L16 1L25 6V22H7Z" fill="#1b8ad6"/><path d="M7 10L16 16L25 10V22H7Z" fill="#40b4f5"/><rect x="1" y="9" width="12" height="12" rx="2" fill="#0f5ea8"/><circle cx="7" cy="15" r="3" stroke="#fff" stroke-width="1.6" fill="none"/></svg>
  <svg class="a" style="left:644px;top:9px" width="24" height="24" viewBox="0 0 24 24"><rect x="2" y="2" width="20" height="15" fill="#d0d6dc" stroke="#888" stroke-width="1"/><rect x="4" y="4" width="16" height="11" fill="#eef2f5"/><path d="M4 11L7 9L9 12L11 5L13 13L15 8L17 10L20 9" stroke="#3a7bd5" stroke-width="1" fill="none"/><ellipse cx="12" cy="21" rx="6" ry="2" fill="#aaa"/><rect x="10" y="17" width="4" height="3" fill="#999"/></svg>
  <svg class="a" style="left:693px;top:10px" width="24" height="21" viewBox="0 0 24 21"><path d="M8 1H16L24 14L20 21Z" fill="#fbbc04"/><path d="M8 1L0 14L4 21L12 7Z" fill="#0f9d58"/><path d="M4 21H20L24 14H8Z" fill="#4285f4"/></svg>
  <svg class="a" style="left:741px;top:7px" width="24" height="27" viewBox="0 0 24 27"><rect x="1" y="2" width="19" height="24" fill="#8ec63f" stroke="#666" stroke-width="1"/><rect x="1" y="2" width="19" height="5" fill="#ddd"/><path d="M5 10V20M7 10V20M10 14H12M13 14H15" stroke="#333" stroke-width="1.2"/><path d="M22 1L14 17" stroke="#e8b830" stroke-width="3"/></svg>
  <svg class="a" style="left:790px;top:8px" width="24" height="25" viewBox="0 0 24 25"><ellipse cx="11" cy="14" rx="10" ry="8" fill="#e6e6e6" stroke="#999" stroke-width="1"/><circle cx="6" cy="13" r="1.8" fill="#e53935"/><circle cx="9" cy="9" r="1.8" fill="#43a047"/><circle cx="14" cy="9" r="1.8" fill="#1e88e5"/><circle cx="7" cy="18" r="1.8" fill="#fdd835"/><path d="M23 1L13 20" stroke="#d4a04a" stroke-width="2.5"/></svg>
  <svg class="a" style="left:839px;top:8px" width="26" height="26" viewBox="0 0 26 26"><rect x="2" y="2" width="18" height="15" fill="#c9d2dc" stroke="#777" stroke-width="1"/><rect x="4" y="4" width="14" height="11" fill="#1e4bd2"/><path d="M4 4L14 4L4 12Z" fill="#4a7af0"/><ellipse cx="11" cy="21" rx="6" ry="2" fill="#bbb"/><circle cx="19" cy="19" r="6" fill="#e8e8e8" stroke="#999" stroke-width="0.8"/><path d="M16 19H22M19.5 17L22 19L19.5 21" stroke="#2a8a3a" stroke-width="1.2" fill="none"/></svg>
  <div class="a" style="left:890px;top:9px;width:22px;height:22px;border-radius:5px;background:#fff"></div>
  <svg class="a" style="left:893px;top:12px" width="16" height="16" viewBox="0 0 16 16"><path d="M2 3H14L2 13H14Z" stroke="#000" stroke-width="2.4" fill="none" stroke-linejoin="round"/></svg>
  <svg class="a" style="left:937px;top:8px" width="26" height="26" viewBox="0 0 26 26"><path d="M4 4H22V18H16V22H10V14H16V10H8V18H4Z" fill="#2aa7e0"/><path d="M6 6H20V16H18V8H6Z" fill="#1d86c0"/></svg>
  <div class="a" style="left:987px;top:8px;width:24px;height:24px;background:#1a1a1a"></div>
  <svg class="a" style="left:990px;top:11px" width="18" height="18" viewBox="0 0 18 18"><defs><linearGradient id="ag" x1="0" y1="0" x2="0" y2="1"><stop offset="0" stop-color="#ff6a8a"/><stop offset=".5" stop-color="#8a7af5"/><stop offset="1" stop-color="#2aa0f5"/></linearGradient></defs><path d="M9 1L17 17H13.5L9 7L4.5 17H1Z" fill="url(#ag)"/></svg>
  <div class="a" style="left:1024px;top:0;width:48px;height:40px;background:linear-gradient(90deg,#3f6650 0 40%,#5a6a6e 40%)"></div>
  <div class="a" style="left:1077px;top:0;width:40px;height:40px;background:linear-gradient(90deg,#3f6650 0 50%,#34474e 50%)"></div>
  <div class="a" style="left:1126px;top:0;width:40px;height:40px;background:linear-gradient(90deg,#3f6650 0 50%,#34474e 50%)"></div>
<div class="a" style="left:440px;top:38px;width:40px;height:2px;background:#76b9ed"></div><div class="a" style="left:636px;top:38px;width:40px;height:2px;background:#76b9ed"></div><div class="a" style="left:685px;top:38px;width:40px;height:2px;background:#76b9ed"></div><div class="a" style="left:734px;top:38px;width:40px;height:2px;background:#76b9ed"></div><div class="a" style="left:783px;top:38px;width:40px;height:2px;background:#76b9ed"></div><div class="a" style="left:832px;top:38px;width:40px;height:2px;background:#76b9ed"></div><div class="a" style="left:881px;top:38px;width:40px;height:2px;background:#76b9ed"></div><div class="a" style="left:930px;top:38px;width:40px;height:2px;background:#76b9ed"></div><div class="a" style="left:979px;top:38px;width:40px;height:2px;background:#76b9ed"></div><div class="a" style="left:1024px;top:38px;width:48px;height:2px;background:#5ee05a"></div><div class="a" style="left:1077px;top:38px;width:40px;height:2px;background:#5ee05a"></div><div class="a" style="left:1126px;top:38px;width:40px;height:2px;background:#5ee05a"></div><svg class="a" style="left:1037px;top:8px" width="24" height="24" viewBox="0 0 24 24"><circle cx="12" cy="12" r="11" fill="#ea4335"/><path d="M12 12L1.5 9.5A11 11 0 0 0 12 23Z" fill="#34a853"/><path d="M12 12L12 23A11 11 0 0 0 22.5 9Z" fill="#fbbc04"/><circle cx="12" cy="12" r="5" fill="#fff"/><circle cx="12" cy="12" r="4" fill="#4285f4"/></svg><div class="a" style="left:1046px;top:18px;width:15px;height:15px;border-radius:50%;background:radial-gradient(circle at 40% 40%,#fff 0 20%,#3a7ad0 40%,#1d4f9a 80%)"></div><svg class="a" style="left:1085px;top:8px" width="24" height="24" viewBox="0 0 24 24"><circle cx="12" cy="12" r="11" fill="#ea4335"/><path d="M12 12L1.5 9.5A11 11 0 0 0 12 23Z" fill="#34a853"/><path d="M12 12L12 23A11 11 0 0 0 22.5 9Z" fill="#fbbc04"/><circle cx="12" cy="12" r="5" fill="#fff"/><circle cx="12" cy="12" r="4" fill="#4285f4"/></svg><div class="a" style="left:1095px;top:18px;width:15px;height:15px;border-radius:50%;background:#e8652a;border:1.5px solid #fff"></div><svg class="a" style="left:1098px;top:21px" width="9" height="9" viewBox="0 0 9 9"><circle cx="4.5" cy="3" r="1.8" stroke="#fff" stroke-width="1.2" fill="none"/><path d="M1 8.5A3.5 3 0 0 1 8 8.5" stroke="#fff" stroke-width="1.2" fill="none"/></svg><svg class="a" style="left:1134px;top:8px" width="24" height="24" viewBox="0 0 24 24"><circle cx="12" cy="12" r="11" fill="#ea4335"/><path d="M12 12L1.5 9.5A11 11 0 0 0 12 23Z" fill="#34a853"/><path d="M12 12L12 23A11 11 0 0 0 22.5 9Z" fill="#fbbc04"/><circle cx="12" cy="12" r="5" fill="#fff"/><circle cx="12" cy="12" r="4" fill="#4285f4"/></svg><div class="a" style="left:1144px;top:18px;width:16px;height:16px;border-radius:50%;background:#4a9a3a;color:#fff;font-size:8px;line-height:16px;text-align:center;font-weight:bold">SJ</div>
  <svg class="a" style="left:1557px;top:8px" width="26" height="24" viewBox="0 0 26 24"><circle cx="12" cy="13" r="9" fill="#f5a623"/><path d="M3 9A3 3 0 0 1 6 6A4 4 0 0 1 13 7A2.5 2.5 0 0 1 13 12H4A2 2 0 0 1 3 9Z" fill="#cfe0f0"/><path d="M12 19A3 3 0 0 1 15 16A4 4 0 0 1 22 17A2.5 2.5 0 0 1 22 22H13A2 2 0 0 1 12 19Z" fill="#cfe0f0"/></svg>
  <div class="a"  style="display:inline-block;transform-origin:0 50%;transform:scaleX(0.894889);left:1590px;top:11.7px;font-size:14.5px;color:#fff;white-space:nowrap">19°C</div>
  <div class="a"  style="display:inline-block;transform-origin:0 50%;transform:scaleX(0.827586);left:1628px;top:9.5px;font-size:14px;color:#fff;white-space:nowrap;font-weight:bold">มีแดดบางส่วน</div>
  <svg class="a" style="left:1724px;top:15px" width="14" height="9" viewBox="0 0 14 9"><path d="M1 8L7 2L13 8" stroke="#fff" stroke-width="1.3" fill="none"/></svg>
  <svg class="a" style="left:1747px;top:10px" width="12" height="20" viewBox="0 0 12 20"><rect x="2.5" y="1" width="7" height="11" rx="3.5" fill="#fff"/><path d="M1 9A5 5 0 0 0 11 9M6 14V18M3 18H9" stroke="#fff" stroke-width="1.3" fill="none"/></svg>
  <div class="a"  style="display:inline-block;transform-origin:0 50%;transform:scaleX(0.816417);left:1773px;top:12px;font-size:13px;color:#fff">ENG</div>
  <div class="a"  style="display:inline-block;transform-origin:0 50%;transform:scaleX(0.901408);left:1813px;top:3px;font-size:13px;color:#fff;white-space:nowrap">7:56 AM</div>
  <div class="a"  style="display:inline-block;transform-origin:0 50%;transform:scaleX(0.898974);left:1809px;top:21px;font-size:13px;color:#fff;white-space:nowrap">1/27/2026</div>
  <svg class="a" style="left:1878px;top:9px" width="20" height="18" viewBox="0 0 20 18"><path d="M1 1H19V13H7L3 17V13H1Z" fill="#fff"/><path d="M4 4H16M4 7H16M4 10H12" stroke="#1e2f3c" stroke-width="1.2"/></svg>
  <div class="a" style="left:1885px;top:18px;width:20px;height:20px;border-radius:50%;background:#1e2f3c;border:1.5px solid #5d6a74;color:#fff;font-size:12px;line-height:17px;text-align:center">22</div>
  <div class="a" style="left:1915px;top:0;width:1px;height:40px;background:#4a5560"></div>
</div>
</body></html>
